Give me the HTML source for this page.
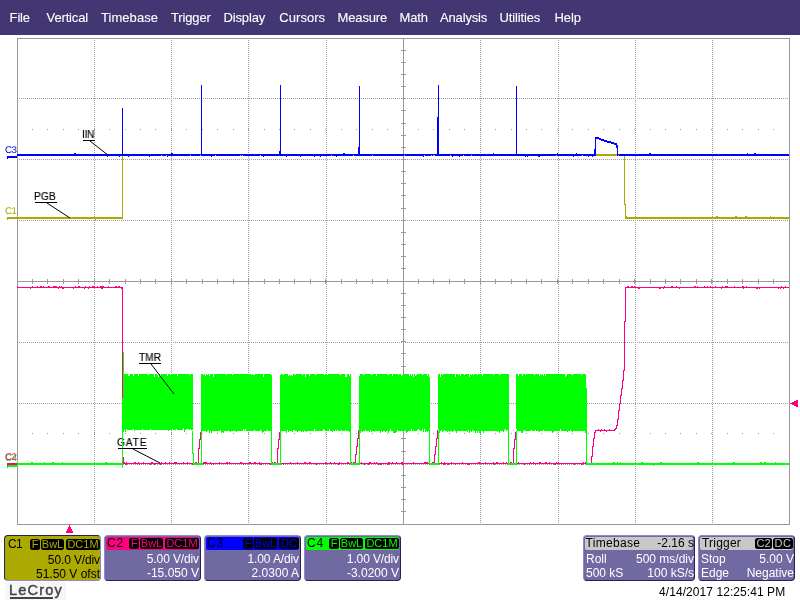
<!DOCTYPE html>
<html><head><meta charset="utf-8"><title>LeCroy</title>
<style>
html,body{margin:0;padding:0}
body{width:800px;height:600px;background:#fff;position:relative;overflow:hidden;font-family:"Liberation Sans",sans-serif;}
#menu{position:absolute;left:0;top:0;width:800px;height:35px;background:#423773;color:#fff;font-size:13px;-webkit-text-stroke:0.1px #fff}
#menu span{position:absolute;top:10px;line-height:15px;white-space:nowrap}
svg{position:absolute;left:0;top:0}
body>div{will-change:transform}
.lbl{position:absolute;font-size:10.67px;line-height:10px;transform-origin:0 0;transform:scaleX(0.95);-webkit-text-stroke:0.15px #000;color:#000;white-space:nowrap}
.ch{position:absolute;font-size:9.8px;line-height:10px;letter-spacing:-0.6px;text-rendering:geometricPrecision;white-space:nowrap}
.box,.ibox{position:absolute;top:535px;box-sizing:border-box;height:46px;background:#7069a2;border:1px solid;border-color:#9088c8 #28205a #28205a #9088c8;border-radius:4px;overflow:hidden;color:#fff;font-size:12px}
.box{width:97px}
.box.pressed{background:#acaa00;color:#000;border-color:#28205a #9088d0 #9088d0 #28205a}
.in{position:absolute;left:0;top:0;right:0;bottom:0}
.pressed .in{left:1px;top:1px;right:-1px;bottom:-1px}
.stripe{position:absolute;left:1px;top:1px;right:1px;height:13px;border-radius:2px}
.box b{position:absolute;left:2px;top:0px;font-weight:normal;font-size:12px;line-height:14px;color:#000;letter-spacing:0.8px}
.bd{position:absolute;right:1px;top:2px;height:11px;white-space:nowrap;font-size:0}
.bd i{display:inline-block;font-style:normal;font-size:11px;line-height:11px;height:11px;background:#000;border-radius:2.5px;text-align:center;letter-spacing:0px}
.l1,.l2{position:absolute;right:1px;white-space:nowrap;line-height:14px}
.l1{top:16px;letter-spacing:-0.12px} .l2{top:30px}
.ibox .hd{position:absolute;left:1px;top:1px;right:1px;height:13px;background:#c8c8c8;border-radius:2px;color:#000}
.ibox span{position:absolute;white-space:nowrap;line-height:14px}
.k{display:inline-block;background:#000;color:#c8c8c8;border-radius:2.5px;font-size:11px;line-height:11px;height:11px;text-align:center;margin-left:1px;font-style:normal;letter-spacing:0px}
</style></head><body>
<div id="menu"><span style="left:9.6px;letter-spacing:-0.15px">File</span><span style="left:46.6px;letter-spacing:-0.15px">Vertical</span><span style="left:101px;letter-spacing:0.05px">Timebase</span><span style="left:171px;letter-spacing:-0.15px">Trigger</span><span style="left:223.5px;letter-spacing:-0.15px">Display</span><span style="left:279.3px;letter-spacing:0.05px">Cursors</span><span style="left:337.6px;letter-spacing:-0.15px">Measure</span><span style="left:399.5px;letter-spacing:-0.15px">Math</span><span style="left:440px;letter-spacing:-0.15px">Analysis</span><span style="left:499.6px;letter-spacing:-0.15px">Utilities</span><span style="left:554.6px;letter-spacing:-0.15px">Help</span></div>
<svg width="800" height="600" viewBox="0 0 800 600" shape-rendering="crispEdges">
<rect x="17.5" y="38.5" width="772" height="486" fill="none" stroke="#989898" stroke-width="1"/>
<line x1="94.5" y1="40" x2="94.5" y2="524" stroke="#9c9c9c" stroke-width="1" stroke-dasharray="1 1"/>
<line x1="171.5" y1="40" x2="171.5" y2="524" stroke="#9c9c9c" stroke-width="1" stroke-dasharray="1 1"/>
<line x1="248.5" y1="40" x2="248.5" y2="524" stroke="#9c9c9c" stroke-width="1" stroke-dasharray="1 1"/>
<line x1="326.5" y1="40" x2="326.5" y2="524" stroke="#9c9c9c" stroke-width="1" stroke-dasharray="1 1"/>
<line x1="480.5" y1="40" x2="480.5" y2="524" stroke="#9c9c9c" stroke-width="1" stroke-dasharray="1 1"/>
<line x1="558.5" y1="40" x2="558.5" y2="524" stroke="#9c9c9c" stroke-width="1" stroke-dasharray="1 1"/>
<line x1="635.5" y1="40" x2="635.5" y2="524" stroke="#9c9c9c" stroke-width="1" stroke-dasharray="1 1"/>
<line x1="712.5" y1="40" x2="712.5" y2="524" stroke="#9c9c9c" stroke-width="1" stroke-dasharray="1 1"/>
<line x1="19" y1="98.5" x2="789" y2="98.5" stroke="#9c9c9c" stroke-width="1" stroke-dasharray="1 1"/>
<line x1="19" y1="159.5" x2="789" y2="159.5" stroke="#9c9c9c" stroke-width="1" stroke-dasharray="1 1"/>
<line x1="19" y1="220.5" x2="789" y2="220.5" stroke="#9c9c9c" stroke-width="1" stroke-dasharray="1 1"/>
<line x1="19" y1="342.5" x2="789" y2="342.5" stroke="#9c9c9c" stroke-width="1" stroke-dasharray="1 1"/>
<line x1="19" y1="403.5" x2="789" y2="403.5" stroke="#9c9c9c" stroke-width="1" stroke-dasharray="1 1"/>
<line x1="19" y1="464.5" x2="789" y2="464.5" stroke="#9c9c9c" stroke-width="1" stroke-dasharray="1 1"/>
<rect x="403" y="38" width="1" height="486" fill="#989898"/>
<rect x="17" y="281" width="772" height="1" fill="#989898"/>
<rect x="32" y="279" width="1" height="5" fill="#989898"/>
<rect x="47" y="279" width="1" height="5" fill="#989898"/>
<rect x="63" y="279" width="1" height="5" fill="#989898"/>
<rect x="78" y="279" width="1" height="5" fill="#989898"/>
<rect x="94" y="279" width="1" height="5" fill="#989898"/>
<rect x="109" y="279" width="1" height="5" fill="#989898"/>
<rect x="125" y="279" width="1" height="5" fill="#989898"/>
<rect x="140" y="279" width="1" height="5" fill="#989898"/>
<rect x="155" y="279" width="1" height="5" fill="#989898"/>
<rect x="171" y="279" width="1" height="5" fill="#989898"/>
<rect x="186" y="279" width="1" height="5" fill="#989898"/>
<rect x="202" y="279" width="1" height="5" fill="#989898"/>
<rect x="217" y="279" width="1" height="5" fill="#989898"/>
<rect x="233" y="279" width="1" height="5" fill="#989898"/>
<rect x="248" y="279" width="1" height="5" fill="#989898"/>
<rect x="264" y="279" width="1" height="5" fill="#989898"/>
<rect x="279" y="279" width="1" height="5" fill="#989898"/>
<rect x="294" y="279" width="1" height="5" fill="#989898"/>
<rect x="310" y="279" width="1" height="5" fill="#989898"/>
<rect x="325" y="279" width="1" height="5" fill="#989898"/>
<rect x="341" y="279" width="1" height="5" fill="#989898"/>
<rect x="356" y="279" width="1" height="5" fill="#989898"/>
<rect x="372" y="279" width="1" height="5" fill="#989898"/>
<rect x="387" y="279" width="1" height="5" fill="#989898"/>
<rect x="403" y="279" width="1" height="5" fill="#989898"/>
<rect x="418" y="279" width="1" height="5" fill="#989898"/>
<rect x="433" y="279" width="1" height="5" fill="#989898"/>
<rect x="449" y="279" width="1" height="5" fill="#989898"/>
<rect x="464" y="279" width="1" height="5" fill="#989898"/>
<rect x="480" y="279" width="1" height="5" fill="#989898"/>
<rect x="495" y="279" width="1" height="5" fill="#989898"/>
<rect x="511" y="279" width="1" height="5" fill="#989898"/>
<rect x="526" y="279" width="1" height="5" fill="#989898"/>
<rect x="541" y="279" width="1" height="5" fill="#989898"/>
<rect x="557" y="279" width="1" height="5" fill="#989898"/>
<rect x="572" y="279" width="1" height="5" fill="#989898"/>
<rect x="588" y="279" width="1" height="5" fill="#989898"/>
<rect x="603" y="279" width="1" height="5" fill="#989898"/>
<rect x="619" y="279" width="1" height="5" fill="#989898"/>
<rect x="634" y="279" width="1" height="5" fill="#989898"/>
<rect x="650" y="279" width="1" height="5" fill="#989898"/>
<rect x="665" y="279" width="1" height="5" fill="#989898"/>
<rect x="680" y="279" width="1" height="5" fill="#989898"/>
<rect x="696" y="279" width="1" height="5" fill="#989898"/>
<rect x="711" y="279" width="1" height="5" fill="#989898"/>
<rect x="727" y="279" width="1" height="5" fill="#989898"/>
<rect x="742" y="279" width="1" height="5" fill="#989898"/>
<rect x="758" y="279" width="1" height="5" fill="#989898"/>
<rect x="773" y="279" width="1" height="5" fill="#989898"/>
<rect x="401" y="50" width="5" height="1" fill="#989898"/>
<rect x="401" y="62" width="5" height="1" fill="#989898"/>
<rect x="401" y="74" width="5" height="1" fill="#989898"/>
<rect x="401" y="86" width="5" height="1" fill="#989898"/>
<rect x="401" y="98" width="5" height="1" fill="#989898"/>
<rect x="401" y="110" width="5" height="1" fill="#989898"/>
<rect x="401" y="123" width="5" height="1" fill="#989898"/>
<rect x="401" y="135" width="5" height="1" fill="#989898"/>
<rect x="401" y="147" width="5" height="1" fill="#989898"/>
<rect x="401" y="159" width="5" height="1" fill="#989898"/>
<rect x="401" y="171" width="5" height="1" fill="#989898"/>
<rect x="401" y="183" width="5" height="1" fill="#989898"/>
<rect x="401" y="195" width="5" height="1" fill="#989898"/>
<rect x="401" y="208" width="5" height="1" fill="#989898"/>
<rect x="401" y="220" width="5" height="1" fill="#989898"/>
<rect x="401" y="232" width="5" height="1" fill="#989898"/>
<rect x="401" y="244" width="5" height="1" fill="#989898"/>
<rect x="401" y="256" width="5" height="1" fill="#989898"/>
<rect x="401" y="268" width="5" height="1" fill="#989898"/>
<rect x="401" y="281" width="5" height="1" fill="#989898"/>
<rect x="401" y="293" width="5" height="1" fill="#989898"/>
<rect x="401" y="305" width="5" height="1" fill="#989898"/>
<rect x="401" y="317" width="5" height="1" fill="#989898"/>
<rect x="401" y="329" width="5" height="1" fill="#989898"/>
<rect x="401" y="341" width="5" height="1" fill="#989898"/>
<rect x="401" y="353" width="5" height="1" fill="#989898"/>
<rect x="401" y="366" width="5" height="1" fill="#989898"/>
<rect x="401" y="378" width="5" height="1" fill="#989898"/>
<rect x="401" y="390" width="5" height="1" fill="#989898"/>
<rect x="401" y="402" width="5" height="1" fill="#989898"/>
<rect x="401" y="414" width="5" height="1" fill="#989898"/>
<rect x="401" y="426" width="5" height="1" fill="#989898"/>
<rect x="401" y="438" width="5" height="1" fill="#989898"/>
<rect x="401" y="451" width="5" height="1" fill="#989898"/>
<rect x="401" y="463" width="5" height="1" fill="#989898"/>
<rect x="401" y="475" width="5" height="1" fill="#989898"/>
<rect x="401" y="487" width="5" height="1" fill="#989898"/>
<rect x="401" y="499" width="5" height="1" fill="#989898"/>
<rect x="401" y="511" width="5" height="1" fill="#989898"/>
<rect x="32" y="129" width="1" height="1" fill="#9c9c9c"/>
<rect x="47" y="129" width="1" height="1" fill="#9c9c9c"/>
<rect x="63" y="129" width="1" height="1" fill="#9c9c9c"/>
<rect x="78" y="129" width="1" height="1" fill="#9c9c9c"/>
<rect x="94" y="129" width="1" height="1" fill="#9c9c9c"/>
<rect x="109" y="129" width="1" height="1" fill="#9c9c9c"/>
<rect x="125" y="129" width="1" height="1" fill="#9c9c9c"/>
<rect x="140" y="129" width="1" height="1" fill="#9c9c9c"/>
<rect x="155" y="129" width="1" height="1" fill="#9c9c9c"/>
<rect x="171" y="129" width="1" height="1" fill="#9c9c9c"/>
<rect x="186" y="129" width="1" height="1" fill="#9c9c9c"/>
<rect x="202" y="129" width="1" height="1" fill="#9c9c9c"/>
<rect x="217" y="129" width="1" height="1" fill="#9c9c9c"/>
<rect x="233" y="129" width="1" height="1" fill="#9c9c9c"/>
<rect x="248" y="129" width="1" height="1" fill="#9c9c9c"/>
<rect x="264" y="129" width="1" height="1" fill="#9c9c9c"/>
<rect x="279" y="129" width="1" height="1" fill="#9c9c9c"/>
<rect x="294" y="129" width="1" height="1" fill="#9c9c9c"/>
<rect x="310" y="129" width="1" height="1" fill="#9c9c9c"/>
<rect x="325" y="129" width="1" height="1" fill="#9c9c9c"/>
<rect x="341" y="129" width="1" height="1" fill="#9c9c9c"/>
<rect x="356" y="129" width="1" height="1" fill="#9c9c9c"/>
<rect x="372" y="129" width="1" height="1" fill="#9c9c9c"/>
<rect x="387" y="129" width="1" height="1" fill="#9c9c9c"/>
<rect x="403" y="129" width="1" height="1" fill="#9c9c9c"/>
<rect x="418" y="129" width="1" height="1" fill="#9c9c9c"/>
<rect x="433" y="129" width="1" height="1" fill="#9c9c9c"/>
<rect x="449" y="129" width="1" height="1" fill="#9c9c9c"/>
<rect x="464" y="129" width="1" height="1" fill="#9c9c9c"/>
<rect x="480" y="129" width="1" height="1" fill="#9c9c9c"/>
<rect x="495" y="129" width="1" height="1" fill="#9c9c9c"/>
<rect x="511" y="129" width="1" height="1" fill="#9c9c9c"/>
<rect x="526" y="129" width="1" height="1" fill="#9c9c9c"/>
<rect x="541" y="129" width="1" height="1" fill="#9c9c9c"/>
<rect x="557" y="129" width="1" height="1" fill="#9c9c9c"/>
<rect x="572" y="129" width="1" height="1" fill="#9c9c9c"/>
<rect x="588" y="129" width="1" height="1" fill="#9c9c9c"/>
<rect x="603" y="129" width="1" height="1" fill="#9c9c9c"/>
<rect x="619" y="129" width="1" height="1" fill="#9c9c9c"/>
<rect x="634" y="129" width="1" height="1" fill="#9c9c9c"/>
<rect x="650" y="129" width="1" height="1" fill="#9c9c9c"/>
<rect x="665" y="129" width="1" height="1" fill="#9c9c9c"/>
<rect x="680" y="129" width="1" height="1" fill="#9c9c9c"/>
<rect x="696" y="129" width="1" height="1" fill="#9c9c9c"/>
<rect x="711" y="129" width="1" height="1" fill="#9c9c9c"/>
<rect x="727" y="129" width="1" height="1" fill="#9c9c9c"/>
<rect x="742" y="129" width="1" height="1" fill="#9c9c9c"/>
<rect x="758" y="129" width="1" height="1" fill="#9c9c9c"/>
<rect x="773" y="129" width="1" height="1" fill="#9c9c9c"/>
<rect x="32" y="433" width="1" height="1" fill="#9c9c9c"/>
<rect x="47" y="433" width="1" height="1" fill="#9c9c9c"/>
<rect x="63" y="433" width="1" height="1" fill="#9c9c9c"/>
<rect x="78" y="433" width="1" height="1" fill="#9c9c9c"/>
<rect x="94" y="433" width="1" height="1" fill="#9c9c9c"/>
<rect x="109" y="433" width="1" height="1" fill="#9c9c9c"/>
<rect x="125" y="433" width="1" height="1" fill="#9c9c9c"/>
<rect x="140" y="433" width="1" height="1" fill="#9c9c9c"/>
<rect x="155" y="433" width="1" height="1" fill="#9c9c9c"/>
<rect x="171" y="433" width="1" height="1" fill="#9c9c9c"/>
<rect x="186" y="433" width="1" height="1" fill="#9c9c9c"/>
<rect x="202" y="433" width="1" height="1" fill="#9c9c9c"/>
<rect x="217" y="433" width="1" height="1" fill="#9c9c9c"/>
<rect x="233" y="433" width="1" height="1" fill="#9c9c9c"/>
<rect x="248" y="433" width="1" height="1" fill="#9c9c9c"/>
<rect x="264" y="433" width="1" height="1" fill="#9c9c9c"/>
<rect x="279" y="433" width="1" height="1" fill="#9c9c9c"/>
<rect x="294" y="433" width="1" height="1" fill="#9c9c9c"/>
<rect x="310" y="433" width="1" height="1" fill="#9c9c9c"/>
<rect x="325" y="433" width="1" height="1" fill="#9c9c9c"/>
<rect x="341" y="433" width="1" height="1" fill="#9c9c9c"/>
<rect x="356" y="433" width="1" height="1" fill="#9c9c9c"/>
<rect x="372" y="433" width="1" height="1" fill="#9c9c9c"/>
<rect x="387" y="433" width="1" height="1" fill="#9c9c9c"/>
<rect x="403" y="433" width="1" height="1" fill="#9c9c9c"/>
<rect x="418" y="433" width="1" height="1" fill="#9c9c9c"/>
<rect x="433" y="433" width="1" height="1" fill="#9c9c9c"/>
<rect x="449" y="433" width="1" height="1" fill="#9c9c9c"/>
<rect x="464" y="433" width="1" height="1" fill="#9c9c9c"/>
<rect x="480" y="433" width="1" height="1" fill="#9c9c9c"/>
<rect x="495" y="433" width="1" height="1" fill="#9c9c9c"/>
<rect x="511" y="433" width="1" height="1" fill="#9c9c9c"/>
<rect x="526" y="433" width="1" height="1" fill="#9c9c9c"/>
<rect x="541" y="433" width="1" height="1" fill="#9c9c9c"/>
<rect x="557" y="433" width="1" height="1" fill="#9c9c9c"/>
<rect x="572" y="433" width="1" height="1" fill="#9c9c9c"/>
<rect x="588" y="433" width="1" height="1" fill="#9c9c9c"/>
<rect x="603" y="433" width="1" height="1" fill="#9c9c9c"/>
<rect x="619" y="433" width="1" height="1" fill="#9c9c9c"/>
<rect x="634" y="433" width="1" height="1" fill="#9c9c9c"/>
<rect x="650" y="433" width="1" height="1" fill="#9c9c9c"/>
<rect x="665" y="433" width="1" height="1" fill="#9c9c9c"/>
<rect x="680" y="433" width="1" height="1" fill="#9c9c9c"/>
<rect x="696" y="433" width="1" height="1" fill="#9c9c9c"/>
<rect x="711" y="433" width="1" height="1" fill="#9c9c9c"/>
<rect x="727" y="433" width="1" height="1" fill="#9c9c9c"/>
<rect x="742" y="433" width="1" height="1" fill="#9c9c9c"/>
<rect x="758" y="433" width="1" height="1" fill="#9c9c9c"/>
<rect x="773" y="433" width="1" height="1" fill="#9c9c9c"/>
<rect x="17" y="217" width="105" height="2" fill="#acaa00"/>
<rect x="95" y="219" width="1" height="1" fill="#acaa00"/>
<rect x="122" y="155" width="1" height="64" fill="#acaa00"/>
<rect x="122" y="154" width="503" height="2" fill="#acaa00"/>
<rect x="624" y="154" width="1" height="51" fill="#acaa00"/>
<rect x="625" y="204" width="1" height="15" fill="#acaa00"/>
<rect x="625" y="217" width="164" height="2" fill="#acaa00"/>
<rect x="626" y="216" width="1" height="1" fill="#acaa00"/>
<rect x="716" y="216" width="2" height="1" fill="#acaa00"/>
<rect x="735" y="216" width="2" height="1" fill="#acaa00"/>
<rect x="745" y="216" width="2" height="1" fill="#acaa00"/>
<rect x="770" y="216" width="1" height="1" fill="#acaa00"/>
<rect x="17" y="287" width="105" height="1" fill="#ff0080"/>
<rect x="17" y="286" width="1" height="1" fill="#ff0080"/>
<rect x="30" y="288" width="1" height="1" fill="#ff0080"/>
<rect x="32" y="286" width="1" height="1" fill="#ff0080"/>
<rect x="37" y="286" width="1" height="1" fill="#ff0080"/>
<rect x="40" y="286" width="1" height="1" fill="#ff0080"/>
<rect x="41" y="286" width="1" height="1" fill="#ff0080"/>
<rect x="43" y="286" width="1" height="1" fill="#ff0080"/>
<rect x="48" y="286" width="2" height="1" fill="#ff0080"/>
<rect x="53" y="286" width="1" height="1" fill="#ff0080"/>
<rect x="54" y="286" width="2" height="1" fill="#ff0080"/>
<rect x="56" y="286" width="1" height="1" fill="#ff0080"/>
<rect x="58" y="288" width="1" height="1" fill="#ff0080"/>
<rect x="59" y="286" width="1" height="1" fill="#ff0080"/>
<rect x="61" y="286" width="1" height="1" fill="#ff0080"/>
<rect x="62" y="288" width="1" height="1" fill="#ff0080"/>
<rect x="63" y="288" width="1" height="1" fill="#ff0080"/>
<rect x="73" y="288" width="1" height="1" fill="#ff0080"/>
<rect x="75" y="286" width="1" height="1" fill="#ff0080"/>
<rect x="78" y="286" width="1" height="1" fill="#ff0080"/>
<rect x="79" y="286" width="1" height="1" fill="#ff0080"/>
<rect x="84" y="288" width="1" height="1" fill="#ff0080"/>
<rect x="85" y="286" width="1" height="1" fill="#ff0080"/>
<rect x="88" y="288" width="1" height="1" fill="#ff0080"/>
<rect x="89" y="286" width="1" height="1" fill="#ff0080"/>
<rect x="92" y="286" width="2" height="1" fill="#ff0080"/>
<rect x="94" y="286" width="1" height="1" fill="#ff0080"/>
<rect x="97" y="286" width="1" height="1" fill="#ff0080"/>
<rect x="100" y="286" width="2" height="1" fill="#ff0080"/>
<rect x="101" y="288" width="2" height="1" fill="#ff0080"/>
<rect x="102" y="286" width="2" height="1" fill="#ff0080"/>
<rect x="108" y="286" width="1" height="1" fill="#ff0080"/>
<rect x="115" y="286" width="1" height="1" fill="#ff0080"/>
<rect x="116" y="286" width="1" height="1" fill="#ff0080"/>
<rect x="118" y="286" width="2" height="1" fill="#ff0080"/>
<rect x="121" y="288" width="1" height="1" fill="#ff0080"/>
<rect x="122" y="287" width="1" height="176" fill="#ff0080"/>
<rect x="123" y="457" width="1" height="7" fill="#ff0080"/>
<rect x="123" y="463" width="463" height="1" fill="#ff0080"/>
<rect x="124" y="462" width="1" height="1" fill="#ff0080"/>
<rect x="125" y="464" width="2" height="1" fill="#ff0080"/>
<rect x="126" y="462" width="1" height="1" fill="#ff0080"/>
<rect x="134" y="462" width="2" height="1" fill="#ff0080"/>
<rect x="135" y="462" width="1" height="1" fill="#ff0080"/>
<rect x="137" y="464" width="1" height="1" fill="#ff0080"/>
<rect x="138" y="462" width="1" height="1" fill="#ff0080"/>
<rect x="139" y="464" width="1" height="1" fill="#ff0080"/>
<rect x="143" y="462" width="1" height="1" fill="#ff0080"/>
<rect x="150" y="464" width="1" height="1" fill="#ff0080"/>
<rect x="151" y="462" width="2" height="1" fill="#ff0080"/>
<rect x="154" y="464" width="1" height="1" fill="#ff0080"/>
<rect x="160" y="464" width="1" height="1" fill="#ff0080"/>
<rect x="161" y="462" width="1" height="1" fill="#ff0080"/>
<rect x="165" y="462" width="1" height="1" fill="#ff0080"/>
<rect x="169" y="462" width="1" height="1" fill="#ff0080"/>
<rect x="174" y="462" width="2" height="1" fill="#ff0080"/>
<rect x="176" y="462" width="1" height="1" fill="#ff0080"/>
<rect x="183" y="462" width="1" height="1" fill="#ff0080"/>
<rect x="187" y="462" width="1" height="1" fill="#ff0080"/>
<rect x="192" y="464" width="2" height="1" fill="#ff0080"/>
<rect x="193" y="462" width="1" height="1" fill="#ff0080"/>
<rect x="195" y="462" width="1" height="1" fill="#ff0080"/>
<rect x="201" y="462" width="1" height="1" fill="#ff0080"/>
<rect x="203" y="462" width="2" height="1" fill="#ff0080"/>
<rect x="204" y="462" width="2" height="1" fill="#ff0080"/>
<rect x="205" y="462" width="2" height="1" fill="#ff0080"/>
<rect x="210" y="462" width="1" height="1" fill="#ff0080"/>
<rect x="211" y="464" width="1" height="1" fill="#ff0080"/>
<rect x="213" y="464" width="1" height="1" fill="#ff0080"/>
<rect x="219" y="462" width="1" height="1" fill="#ff0080"/>
<rect x="226" y="462" width="1" height="1" fill="#ff0080"/>
<rect x="227" y="462" width="1" height="1" fill="#ff0080"/>
<rect x="229" y="462" width="1" height="1" fill="#ff0080"/>
<rect x="240" y="462" width="1" height="1" fill="#ff0080"/>
<rect x="241" y="462" width="1" height="1" fill="#ff0080"/>
<rect x="243" y="464" width="1" height="1" fill="#ff0080"/>
<rect x="249" y="462" width="2" height="1" fill="#ff0080"/>
<rect x="254" y="462" width="2" height="1" fill="#ff0080"/>
<rect x="259" y="462" width="1" height="1" fill="#ff0080"/>
<rect x="260" y="464" width="2" height="1" fill="#ff0080"/>
<rect x="270" y="464" width="1" height="1" fill="#ff0080"/>
<rect x="271" y="462" width="2" height="1" fill="#ff0080"/>
<rect x="279" y="464" width="1" height="1" fill="#ff0080"/>
<rect x="283" y="464" width="1" height="1" fill="#ff0080"/>
<rect x="290" y="462" width="1" height="1" fill="#ff0080"/>
<rect x="297" y="462" width="1" height="1" fill="#ff0080"/>
<rect x="304" y="462" width="2" height="1" fill="#ff0080"/>
<rect x="309" y="462" width="2" height="1" fill="#ff0080"/>
<rect x="316" y="464" width="1" height="1" fill="#ff0080"/>
<rect x="325" y="462" width="1" height="1" fill="#ff0080"/>
<rect x="330" y="462" width="1" height="1" fill="#ff0080"/>
<rect x="334" y="462" width="1" height="1" fill="#ff0080"/>
<rect x="338" y="464" width="1" height="1" fill="#ff0080"/>
<rect x="339" y="462" width="1" height="1" fill="#ff0080"/>
<rect x="347" y="462" width="2" height="1" fill="#ff0080"/>
<rect x="350" y="462" width="2" height="1" fill="#ff0080"/>
<rect x="353" y="462" width="1" height="1" fill="#ff0080"/>
<rect x="356" y="464" width="1" height="1" fill="#ff0080"/>
<rect x="361" y="462" width="1" height="1" fill="#ff0080"/>
<rect x="364" y="464" width="1" height="1" fill="#ff0080"/>
<rect x="368" y="464" width="1" height="1" fill="#ff0080"/>
<rect x="369" y="462" width="2" height="1" fill="#ff0080"/>
<rect x="374" y="462" width="1" height="1" fill="#ff0080"/>
<rect x="376" y="462" width="1" height="1" fill="#ff0080"/>
<rect x="378" y="464" width="1" height="1" fill="#ff0080"/>
<rect x="380" y="464" width="2" height="1" fill="#ff0080"/>
<rect x="387" y="464" width="2" height="1" fill="#ff0080"/>
<rect x="388" y="462" width="2" height="1" fill="#ff0080"/>
<rect x="392" y="462" width="1" height="1" fill="#ff0080"/>
<rect x="396" y="462" width="1" height="1" fill="#ff0080"/>
<rect x="401" y="462" width="2" height="1" fill="#ff0080"/>
<rect x="402" y="464" width="2" height="1" fill="#ff0080"/>
<rect x="403" y="464" width="1" height="1" fill="#ff0080"/>
<rect x="413" y="462" width="1" height="1" fill="#ff0080"/>
<rect x="424" y="462" width="1" height="1" fill="#ff0080"/>
<rect x="425" y="462" width="1" height="1" fill="#ff0080"/>
<rect x="426" y="462" width="2" height="1" fill="#ff0080"/>
<rect x="433" y="464" width="1" height="1" fill="#ff0080"/>
<rect x="441" y="462" width="1" height="1" fill="#ff0080"/>
<rect x="443" y="464" width="2" height="1" fill="#ff0080"/>
<rect x="444" y="462" width="1" height="1" fill="#ff0080"/>
<rect x="447" y="464" width="2" height="1" fill="#ff0080"/>
<rect x="451" y="462" width="1" height="1" fill="#ff0080"/>
<rect x="455" y="464" width="1" height="1" fill="#ff0080"/>
<rect x="462" y="462" width="1" height="1" fill="#ff0080"/>
<rect x="467" y="464" width="1" height="1" fill="#ff0080"/>
<rect x="468" y="464" width="1" height="1" fill="#ff0080"/>
<rect x="469" y="464" width="1" height="1" fill="#ff0080"/>
<rect x="478" y="462" width="2" height="1" fill="#ff0080"/>
<rect x="485" y="462" width="1" height="1" fill="#ff0080"/>
<rect x="493" y="462" width="1" height="1" fill="#ff0080"/>
<rect x="494" y="464" width="1" height="1" fill="#ff0080"/>
<rect x="496" y="462" width="1" height="1" fill="#ff0080"/>
<rect x="497" y="462" width="1" height="1" fill="#ff0080"/>
<rect x="503" y="462" width="1" height="1" fill="#ff0080"/>
<rect x="506" y="462" width="1" height="1" fill="#ff0080"/>
<rect x="509" y="464" width="1" height="1" fill="#ff0080"/>
<rect x="516" y="462" width="1" height="1" fill="#ff0080"/>
<rect x="518" y="462" width="1" height="1" fill="#ff0080"/>
<rect x="524" y="464" width="1" height="1" fill="#ff0080"/>
<rect x="529" y="464" width="1" height="1" fill="#ff0080"/>
<rect x="530" y="462" width="1" height="1" fill="#ff0080"/>
<rect x="533" y="462" width="1" height="1" fill="#ff0080"/>
<rect x="535" y="464" width="1" height="1" fill="#ff0080"/>
<rect x="539" y="462" width="2" height="1" fill="#ff0080"/>
<rect x="545" y="462" width="2" height="1" fill="#ff0080"/>
<rect x="549" y="462" width="1" height="1" fill="#ff0080"/>
<rect x="554" y="464" width="2" height="1" fill="#ff0080"/>
<rect x="555" y="464" width="1" height="1" fill="#ff0080"/>
<rect x="556" y="462" width="1" height="1" fill="#ff0080"/>
<rect x="558" y="462" width="1" height="1" fill="#ff0080"/>
<rect x="561" y="464" width="1" height="1" fill="#ff0080"/>
<rect x="574" y="464" width="1" height="1" fill="#ff0080"/>
<rect x="581" y="464" width="2" height="1" fill="#ff0080"/>
<rect x="583" y="462" width="1" height="1" fill="#ff0080"/>
<rect x="585" y="462" width="1" height="1" fill="#ff0080"/>
<rect x="195" y="462" width="2" height="1" fill="#ff0080"/>
<rect x="198" y="448" width="1" height="15" fill="#ff0080"/>
<rect x="199" y="439" width="1" height="10" fill="#ff0080"/>
<rect x="200" y="432" width="1" height="8" fill="#ff0080"/>
<rect x="274" y="462" width="2" height="1" fill="#ff0080"/>
<rect x="277" y="448" width="1" height="15" fill="#ff0080"/>
<rect x="278" y="439" width="1" height="10" fill="#ff0080"/>
<rect x="279" y="432" width="1" height="8" fill="#ff0080"/>
<rect x="353" y="462" width="2" height="1" fill="#ff0080"/>
<rect x="355" y="454" width="1" height="9" fill="#ff0080"/>
<rect x="356" y="446" width="1" height="9" fill="#ff0080"/>
<rect x="357" y="438" width="1" height="9" fill="#ff0080"/>
<rect x="358" y="430" width="1" height="9" fill="#ff0080"/>
<rect x="432" y="462" width="2" height="1" fill="#ff0080"/>
<rect x="434" y="454" width="1" height="9" fill="#ff0080"/>
<rect x="435" y="446" width="1" height="9" fill="#ff0080"/>
<rect x="436" y="438" width="1" height="9" fill="#ff0080"/>
<rect x="437" y="430" width="1" height="9" fill="#ff0080"/>
<rect x="510" y="462" width="2" height="1" fill="#ff0080"/>
<rect x="513" y="448" width="1" height="15" fill="#ff0080"/>
<rect x="514" y="439" width="1" height="10" fill="#ff0080"/>
<rect x="515" y="432" width="1" height="8" fill="#ff0080"/>
<rect x="591" y="456" width="1" height="8" fill="#ff0080"/>
<rect x="592" y="446" width="1" height="11" fill="#ff0080"/>
<rect x="593" y="438" width="1" height="9" fill="#ff0080"/>
<rect x="594" y="432" width="1" height="7" fill="#ff0080"/>
<rect x="595" y="430" width="1" height="3" fill="#ff0080"/>
<rect x="595" y="430" width="19" height="1" fill="#ff0080"/>
<rect x="598" y="429" width="1" height="1" fill="#ff0080"/>
<rect x="601" y="429" width="1" height="1" fill="#ff0080"/>
<rect x="604" y="429" width="1" height="1" fill="#ff0080"/>
<rect x="609" y="429" width="1" height="1" fill="#ff0080"/>
<rect x="600" y="431" width="1" height="1" fill="#ff0080"/>
<rect x="606" y="431" width="1" height="1" fill="#ff0080"/>
<rect x="614" y="429" width="1" height="2" fill="#ff0080"/>
<rect x="615" y="428" width="1" height="2" fill="#ff0080"/>
<rect x="616" y="425" width="1" height="4" fill="#ff0080"/>
<rect x="617" y="419" width="1" height="7" fill="#ff0080"/>
<rect x="618" y="410" width="1" height="10" fill="#ff0080"/>
<rect x="619" y="403" width="1" height="8" fill="#ff0080"/>
<rect x="620" y="395" width="1" height="9" fill="#ff0080"/>
<rect x="621" y="388" width="1" height="8" fill="#ff0080"/>
<rect x="622" y="380" width="1" height="9" fill="#ff0080"/>
<rect x="623" y="370" width="1" height="11" fill="#ff0080"/>
<rect x="624" y="321" width="1" height="50" fill="#ff0080"/>
<rect x="625" y="287" width="1" height="35" fill="#ff0080"/>
<rect x="625" y="287" width="164" height="1" fill="#ff0080"/>
<rect x="627" y="286" width="1" height="1" fill="#ff0080"/>
<rect x="628" y="286" width="1" height="1" fill="#ff0080"/>
<rect x="631" y="286" width="2" height="1" fill="#ff0080"/>
<rect x="634" y="286" width="1" height="1" fill="#ff0080"/>
<rect x="638" y="288" width="2" height="1" fill="#ff0080"/>
<rect x="659" y="288" width="2" height="1" fill="#ff0080"/>
<rect x="660" y="288" width="1" height="1" fill="#ff0080"/>
<rect x="663" y="288" width="1" height="1" fill="#ff0080"/>
<rect x="664" y="286" width="1" height="1" fill="#ff0080"/>
<rect x="671" y="286" width="2" height="1" fill="#ff0080"/>
<rect x="676" y="286" width="1" height="1" fill="#ff0080"/>
<rect x="679" y="288" width="1" height="1" fill="#ff0080"/>
<rect x="694" y="286" width="2" height="1" fill="#ff0080"/>
<rect x="697" y="286" width="1" height="1" fill="#ff0080"/>
<rect x="704" y="286" width="1" height="1" fill="#ff0080"/>
<rect x="707" y="286" width="1" height="1" fill="#ff0080"/>
<rect x="710" y="286" width="1" height="1" fill="#ff0080"/>
<rect x="715" y="286" width="1" height="1" fill="#ff0080"/>
<rect x="721" y="288" width="1" height="1" fill="#ff0080"/>
<rect x="722" y="286" width="1" height="1" fill="#ff0080"/>
<rect x="725" y="286" width="1" height="1" fill="#ff0080"/>
<rect x="726" y="286" width="1" height="1" fill="#ff0080"/>
<rect x="727" y="286" width="1" height="1" fill="#ff0080"/>
<rect x="734" y="286" width="1" height="1" fill="#ff0080"/>
<rect x="742" y="286" width="2" height="1" fill="#ff0080"/>
<rect x="743" y="288" width="1" height="1" fill="#ff0080"/>
<rect x="746" y="286" width="1" height="1" fill="#ff0080"/>
<rect x="756" y="288" width="1" height="1" fill="#ff0080"/>
<rect x="757" y="288" width="1" height="1" fill="#ff0080"/>
<rect x="759" y="288" width="1" height="1" fill="#ff0080"/>
<rect x="778" y="288" width="1" height="1" fill="#ff0080"/>
<rect x="780" y="288" width="1" height="1" fill="#ff0080"/>
<rect x="781" y="286" width="1" height="1" fill="#ff0080"/>
<rect x="783" y="288" width="1" height="1" fill="#ff0080"/>
<rect x="785" y="286" width="1" height="1" fill="#ff0080"/>
<rect x="17" y="463" width="106" height="2" fill="#00ff00"/>
<rect x="31" y="462" width="2" height="1" fill="#00ff00"/>
<rect x="44" y="462" width="1" height="1" fill="#00ff00"/>
<rect x="52" y="462" width="2" height="1" fill="#00ff00"/>
<rect x="62" y="462" width="1" height="1" fill="#00ff00"/>
<rect x="105" y="462" width="2" height="1" fill="#00ff00"/>
<rect x="123" y="352" width="1" height="46" fill="#00ff00"/>
<rect x="122" y="398" width="1" height="70" fill="#00ff00"/>
<rect x="123" y="378" width="70" height="50" fill="#00ff00"/>
<rect x="123" y="376" width="1" height="2" fill="#00ff00"/>
<rect x="123" y="428" width="1" height="4" fill="#00ff00"/>
<rect x="124" y="374" width="1" height="4" fill="#00ff00"/>
<rect x="124" y="428" width="1" height="2" fill="#00ff00"/>
<rect x="125" y="374" width="1" height="4" fill="#00ff00"/>
<rect x="125" y="428" width="1" height="4" fill="#00ff00"/>
<rect x="126" y="374" width="1" height="4" fill="#00ff00"/>
<rect x="126" y="428" width="1" height="1" fill="#00ff00"/>
<rect x="127" y="374" width="1" height="4" fill="#00ff00"/>
<rect x="127" y="428" width="1" height="2" fill="#00ff00"/>
<rect x="128" y="376" width="1" height="2" fill="#00ff00"/>
<rect x="128" y="428" width="1" height="2" fill="#00ff00"/>
<rect x="129" y="376" width="1" height="2" fill="#00ff00"/>
<rect x="129" y="428" width="1" height="2" fill="#00ff00"/>
<rect x="130" y="374" width="1" height="4" fill="#00ff00"/>
<rect x="130" y="428" width="1" height="2" fill="#00ff00"/>
<rect x="131" y="374" width="1" height="4" fill="#00ff00"/>
<rect x="131" y="428" width="1" height="2" fill="#00ff00"/>
<rect x="132" y="374" width="1" height="4" fill="#00ff00"/>
<rect x="132" y="428" width="1" height="2" fill="#00ff00"/>
<rect x="133" y="376" width="1" height="2" fill="#00ff00"/>
<rect x="133" y="428" width="1" height="1" fill="#00ff00"/>
<rect x="134" y="374" width="1" height="4" fill="#00ff00"/>
<rect x="134" y="428" width="1" height="3" fill="#00ff00"/>
<rect x="135" y="374" width="1" height="4" fill="#00ff00"/>
<rect x="135" y="428" width="1" height="2" fill="#00ff00"/>
<rect x="136" y="374" width="1" height="4" fill="#00ff00"/>
<rect x="136" y="428" width="1" height="2" fill="#00ff00"/>
<rect x="137" y="374" width="1" height="4" fill="#00ff00"/>
<rect x="137" y="428" width="1" height="2" fill="#00ff00"/>
<rect x="138" y="376" width="1" height="2" fill="#00ff00"/>
<rect x="138" y="428" width="1" height="2" fill="#00ff00"/>
<rect x="139" y="374" width="1" height="4" fill="#00ff00"/>
<rect x="139" y="428" width="1" height="2" fill="#00ff00"/>
<rect x="140" y="374" width="1" height="4" fill="#00ff00"/>
<rect x="140" y="428" width="1" height="2" fill="#00ff00"/>
<rect x="141" y="374" width="1" height="4" fill="#00ff00"/>
<rect x="141" y="428" width="1" height="2" fill="#00ff00"/>
<rect x="142" y="374" width="1" height="4" fill="#00ff00"/>
<rect x="142" y="428" width="1" height="1" fill="#00ff00"/>
<rect x="143" y="374" width="1" height="4" fill="#00ff00"/>
<rect x="143" y="428" width="1" height="2" fill="#00ff00"/>
<rect x="144" y="374" width="1" height="4" fill="#00ff00"/>
<rect x="144" y="428" width="1" height="2" fill="#00ff00"/>
<rect x="145" y="374" width="1" height="4" fill="#00ff00"/>
<rect x="145" y="428" width="1" height="2" fill="#00ff00"/>
<rect x="146" y="374" width="1" height="4" fill="#00ff00"/>
<rect x="146" y="428" width="1" height="2" fill="#00ff00"/>
<rect x="147" y="374" width="1" height="4" fill="#00ff00"/>
<rect x="147" y="428" width="1" height="2" fill="#00ff00"/>
<rect x="148" y="375" width="1" height="3" fill="#00ff00"/>
<rect x="148" y="428" width="1" height="2" fill="#00ff00"/>
<rect x="149" y="374" width="1" height="4" fill="#00ff00"/>
<rect x="149" y="428" width="1" height="2" fill="#00ff00"/>
<rect x="150" y="374" width="1" height="4" fill="#00ff00"/>
<rect x="150" y="428" width="1" height="1" fill="#00ff00"/>
<rect x="151" y="374" width="1" height="4" fill="#00ff00"/>
<rect x="151" y="428" width="1" height="2" fill="#00ff00"/>
<rect x="152" y="374" width="1" height="4" fill="#00ff00"/>
<rect x="152" y="428" width="1" height="2" fill="#00ff00"/>
<rect x="153" y="374" width="1" height="4" fill="#00ff00"/>
<rect x="153" y="428" width="1" height="2" fill="#00ff00"/>
<rect x="154" y="377" width="1" height="1" fill="#00ff00"/>
<rect x="154" y="428" width="1" height="2" fill="#00ff00"/>
<rect x="155" y="374" width="1" height="4" fill="#00ff00"/>
<rect x="155" y="428" width="1" height="2" fill="#00ff00"/>
<rect x="156" y="374" width="1" height="4" fill="#00ff00"/>
<rect x="156" y="428" width="1" height="2" fill="#00ff00"/>
<rect x="157" y="375" width="1" height="3" fill="#00ff00"/>
<rect x="157" y="428" width="1" height="2" fill="#00ff00"/>
<rect x="158" y="377" width="1" height="1" fill="#00ff00"/>
<rect x="158" y="428" width="1" height="2" fill="#00ff00"/>
<rect x="159" y="374" width="1" height="4" fill="#00ff00"/>
<rect x="159" y="428" width="1" height="2" fill="#00ff00"/>
<rect x="160" y="376" width="1" height="2" fill="#00ff00"/>
<rect x="160" y="428" width="1" height="2" fill="#00ff00"/>
<rect x="161" y="374" width="1" height="4" fill="#00ff00"/>
<rect x="161" y="428" width="1" height="2" fill="#00ff00"/>
<rect x="162" y="374" width="1" height="4" fill="#00ff00"/>
<rect x="162" y="428" width="1" height="2" fill="#00ff00"/>
<rect x="163" y="374" width="1" height="4" fill="#00ff00"/>
<rect x="163" y="428" width="1" height="2" fill="#00ff00"/>
<rect x="164" y="374" width="1" height="4" fill="#00ff00"/>
<rect x="164" y="428" width="1" height="2" fill="#00ff00"/>
<rect x="165" y="374" width="1" height="4" fill="#00ff00"/>
<rect x="165" y="428" width="1" height="2" fill="#00ff00"/>
<rect x="166" y="374" width="1" height="4" fill="#00ff00"/>
<rect x="166" y="428" width="1" height="2" fill="#00ff00"/>
<rect x="167" y="376" width="1" height="2" fill="#00ff00"/>
<rect x="167" y="428" width="1" height="2" fill="#00ff00"/>
<rect x="168" y="374" width="1" height="4" fill="#00ff00"/>
<rect x="168" y="428" width="1" height="3" fill="#00ff00"/>
<rect x="169" y="374" width="1" height="4" fill="#00ff00"/>
<rect x="169" y="428" width="1" height="2" fill="#00ff00"/>
<rect x="170" y="375" width="1" height="3" fill="#00ff00"/>
<rect x="170" y="428" width="1" height="2" fill="#00ff00"/>
<rect x="171" y="374" width="1" height="4" fill="#00ff00"/>
<rect x="171" y="428" width="1" height="2" fill="#00ff00"/>
<rect x="172" y="374" width="1" height="4" fill="#00ff00"/>
<rect x="172" y="428" width="1" height="1" fill="#00ff00"/>
<rect x="173" y="374" width="1" height="4" fill="#00ff00"/>
<rect x="173" y="428" width="1" height="2" fill="#00ff00"/>
<rect x="174" y="374" width="1" height="4" fill="#00ff00"/>
<rect x="174" y="428" width="1" height="2" fill="#00ff00"/>
<rect x="175" y="374" width="1" height="4" fill="#00ff00"/>
<rect x="175" y="428" width="1" height="2" fill="#00ff00"/>
<rect x="176" y="374" width="1" height="4" fill="#00ff00"/>
<rect x="176" y="428" width="1" height="1" fill="#00ff00"/>
<rect x="177" y="376" width="1" height="2" fill="#00ff00"/>
<rect x="177" y="428" width="1" height="2" fill="#00ff00"/>
<rect x="178" y="374" width="1" height="4" fill="#00ff00"/>
<rect x="178" y="428" width="1" height="2" fill="#00ff00"/>
<rect x="179" y="374" width="1" height="4" fill="#00ff00"/>
<rect x="179" y="428" width="1" height="2" fill="#00ff00"/>
<rect x="180" y="374" width="1" height="4" fill="#00ff00"/>
<rect x="180" y="428" width="1" height="2" fill="#00ff00"/>
<rect x="181" y="374" width="1" height="4" fill="#00ff00"/>
<rect x="181" y="428" width="1" height="2" fill="#00ff00"/>
<rect x="182" y="374" width="1" height="4" fill="#00ff00"/>
<rect x="182" y="428" width="1" height="2" fill="#00ff00"/>
<rect x="183" y="374" width="1" height="4" fill="#00ff00"/>
<rect x="183" y="428" width="1" height="0" fill="#00ff00"/>
<rect x="184" y="374" width="1" height="4" fill="#00ff00"/>
<rect x="184" y="428" width="1" height="4" fill="#00ff00"/>
<rect x="185" y="374" width="1" height="4" fill="#00ff00"/>
<rect x="185" y="428" width="1" height="2" fill="#00ff00"/>
<rect x="186" y="374" width="1" height="4" fill="#00ff00"/>
<rect x="186" y="428" width="1" height="1" fill="#00ff00"/>
<rect x="187" y="374" width="1" height="4" fill="#00ff00"/>
<rect x="187" y="428" width="1" height="1" fill="#00ff00"/>
<rect x="188" y="374" width="1" height="4" fill="#00ff00"/>
<rect x="188" y="428" width="1" height="1" fill="#00ff00"/>
<rect x="189" y="375" width="1" height="3" fill="#00ff00"/>
<rect x="189" y="428" width="1" height="2" fill="#00ff00"/>
<rect x="190" y="374" width="1" height="4" fill="#00ff00"/>
<rect x="190" y="428" width="1" height="1" fill="#00ff00"/>
<rect x="191" y="374" width="1" height="4" fill="#00ff00"/>
<rect x="191" y="428" width="1" height="2" fill="#00ff00"/>
<rect x="192" y="374" width="1" height="4" fill="#00ff00"/>
<rect x="192" y="428" width="1" height="2" fill="#00ff00"/>
<rect x="192" y="431" width="1" height="23" fill="#00ff00"/>
<rect x="193" y="453" width="1" height="12" fill="#00ff00"/>
<rect x="193" y="463" width="10" height="2" fill="#00ff00"/>
<rect x="201" y="431" width="1" height="34" fill="#00ff00"/>
<rect x="201" y="378" width="71" height="50" fill="#00ff00"/>
<rect x="201" y="374" width="1" height="4" fill="#00ff00"/>
<rect x="201" y="428" width="1" height="3" fill="#00ff00"/>
<rect x="202" y="374" width="1" height="4" fill="#00ff00"/>
<rect x="202" y="428" width="1" height="3" fill="#00ff00"/>
<rect x="203" y="375" width="1" height="3" fill="#00ff00"/>
<rect x="203" y="428" width="1" height="3" fill="#00ff00"/>
<rect x="204" y="374" width="1" height="4" fill="#00ff00"/>
<rect x="204" y="428" width="1" height="3" fill="#00ff00"/>
<rect x="205" y="376" width="1" height="2" fill="#00ff00"/>
<rect x="205" y="428" width="1" height="3" fill="#00ff00"/>
<rect x="206" y="374" width="1" height="4" fill="#00ff00"/>
<rect x="206" y="428" width="1" height="4" fill="#00ff00"/>
<rect x="207" y="375" width="1" height="3" fill="#00ff00"/>
<rect x="207" y="428" width="1" height="3" fill="#00ff00"/>
<rect x="208" y="374" width="1" height="4" fill="#00ff00"/>
<rect x="208" y="428" width="1" height="2" fill="#00ff00"/>
<rect x="209" y="376" width="1" height="2" fill="#00ff00"/>
<rect x="209" y="428" width="1" height="5" fill="#00ff00"/>
<rect x="210" y="374" width="1" height="4" fill="#00ff00"/>
<rect x="210" y="428" width="1" height="3" fill="#00ff00"/>
<rect x="211" y="374" width="1" height="4" fill="#00ff00"/>
<rect x="211" y="428" width="1" height="5" fill="#00ff00"/>
<rect x="212" y="374" width="1" height="4" fill="#00ff00"/>
<rect x="212" y="428" width="1" height="3" fill="#00ff00"/>
<rect x="213" y="377" width="1" height="1" fill="#00ff00"/>
<rect x="213" y="428" width="1" height="3" fill="#00ff00"/>
<rect x="214" y="374" width="1" height="4" fill="#00ff00"/>
<rect x="214" y="428" width="1" height="3" fill="#00ff00"/>
<rect x="215" y="374" width="1" height="4" fill="#00ff00"/>
<rect x="215" y="428" width="1" height="3" fill="#00ff00"/>
<rect x="216" y="374" width="1" height="4" fill="#00ff00"/>
<rect x="216" y="428" width="1" height="3" fill="#00ff00"/>
<rect x="217" y="374" width="1" height="4" fill="#00ff00"/>
<rect x="217" y="428" width="1" height="3" fill="#00ff00"/>
<rect x="218" y="374" width="1" height="4" fill="#00ff00"/>
<rect x="218" y="428" width="1" height="3" fill="#00ff00"/>
<rect x="219" y="374" width="1" height="4" fill="#00ff00"/>
<rect x="219" y="428" width="1" height="3" fill="#00ff00"/>
<rect x="220" y="374" width="1" height="4" fill="#00ff00"/>
<rect x="220" y="428" width="1" height="2" fill="#00ff00"/>
<rect x="221" y="374" width="1" height="4" fill="#00ff00"/>
<rect x="221" y="428" width="1" height="5" fill="#00ff00"/>
<rect x="222" y="374" width="1" height="4" fill="#00ff00"/>
<rect x="222" y="428" width="1" height="4" fill="#00ff00"/>
<rect x="223" y="374" width="1" height="4" fill="#00ff00"/>
<rect x="223" y="428" width="1" height="5" fill="#00ff00"/>
<rect x="224" y="374" width="1" height="4" fill="#00ff00"/>
<rect x="224" y="428" width="1" height="3" fill="#00ff00"/>
<rect x="225" y="374" width="1" height="4" fill="#00ff00"/>
<rect x="225" y="428" width="1" height="3" fill="#00ff00"/>
<rect x="226" y="375" width="1" height="3" fill="#00ff00"/>
<rect x="226" y="428" width="1" height="3" fill="#00ff00"/>
<rect x="227" y="374" width="1" height="4" fill="#00ff00"/>
<rect x="227" y="428" width="1" height="3" fill="#00ff00"/>
<rect x="228" y="374" width="1" height="4" fill="#00ff00"/>
<rect x="228" y="428" width="1" height="3" fill="#00ff00"/>
<rect x="229" y="374" width="1" height="4" fill="#00ff00"/>
<rect x="229" y="428" width="1" height="3" fill="#00ff00"/>
<rect x="230" y="374" width="1" height="4" fill="#00ff00"/>
<rect x="230" y="428" width="1" height="4" fill="#00ff00"/>
<rect x="231" y="374" width="1" height="4" fill="#00ff00"/>
<rect x="231" y="428" width="1" height="3" fill="#00ff00"/>
<rect x="232" y="375" width="1" height="3" fill="#00ff00"/>
<rect x="232" y="428" width="1" height="3" fill="#00ff00"/>
<rect x="233" y="374" width="1" height="4" fill="#00ff00"/>
<rect x="233" y="428" width="1" height="3" fill="#00ff00"/>
<rect x="234" y="374" width="1" height="4" fill="#00ff00"/>
<rect x="234" y="428" width="1" height="3" fill="#00ff00"/>
<rect x="235" y="374" width="1" height="4" fill="#00ff00"/>
<rect x="235" y="428" width="1" height="3" fill="#00ff00"/>
<rect x="236" y="374" width="1" height="4" fill="#00ff00"/>
<rect x="236" y="428" width="1" height="4" fill="#00ff00"/>
<rect x="237" y="374" width="1" height="4" fill="#00ff00"/>
<rect x="237" y="428" width="1" height="3" fill="#00ff00"/>
<rect x="238" y="374" width="1" height="4" fill="#00ff00"/>
<rect x="238" y="428" width="1" height="3" fill="#00ff00"/>
<rect x="239" y="374" width="1" height="4" fill="#00ff00"/>
<rect x="239" y="428" width="1" height="3" fill="#00ff00"/>
<rect x="240" y="374" width="1" height="4" fill="#00ff00"/>
<rect x="240" y="428" width="1" height="3" fill="#00ff00"/>
<rect x="241" y="374" width="1" height="4" fill="#00ff00"/>
<rect x="241" y="428" width="1" height="3" fill="#00ff00"/>
<rect x="242" y="374" width="1" height="4" fill="#00ff00"/>
<rect x="242" y="428" width="1" height="3" fill="#00ff00"/>
<rect x="243" y="374" width="1" height="4" fill="#00ff00"/>
<rect x="243" y="428" width="1" height="1" fill="#00ff00"/>
<rect x="244" y="374" width="1" height="4" fill="#00ff00"/>
<rect x="244" y="428" width="1" height="3" fill="#00ff00"/>
<rect x="245" y="374" width="1" height="4" fill="#00ff00"/>
<rect x="245" y="428" width="1" height="1" fill="#00ff00"/>
<rect x="246" y="374" width="1" height="4" fill="#00ff00"/>
<rect x="246" y="428" width="1" height="3" fill="#00ff00"/>
<rect x="247" y="374" width="1" height="4" fill="#00ff00"/>
<rect x="247" y="428" width="1" height="3" fill="#00ff00"/>
<rect x="248" y="374" width="1" height="4" fill="#00ff00"/>
<rect x="248" y="428" width="1" height="3" fill="#00ff00"/>
<rect x="249" y="374" width="1" height="4" fill="#00ff00"/>
<rect x="249" y="428" width="1" height="3" fill="#00ff00"/>
<rect x="250" y="374" width="1" height="4" fill="#00ff00"/>
<rect x="250" y="428" width="1" height="3" fill="#00ff00"/>
<rect x="251" y="375" width="1" height="3" fill="#00ff00"/>
<rect x="251" y="428" width="1" height="3" fill="#00ff00"/>
<rect x="252" y="374" width="1" height="4" fill="#00ff00"/>
<rect x="252" y="428" width="1" height="3" fill="#00ff00"/>
<rect x="253" y="375" width="1" height="3" fill="#00ff00"/>
<rect x="253" y="428" width="1" height="3" fill="#00ff00"/>
<rect x="254" y="375" width="1" height="3" fill="#00ff00"/>
<rect x="254" y="428" width="1" height="2" fill="#00ff00"/>
<rect x="255" y="374" width="1" height="4" fill="#00ff00"/>
<rect x="255" y="428" width="1" height="3" fill="#00ff00"/>
<rect x="256" y="374" width="1" height="4" fill="#00ff00"/>
<rect x="256" y="428" width="1" height="3" fill="#00ff00"/>
<rect x="257" y="374" width="1" height="4" fill="#00ff00"/>
<rect x="257" y="428" width="1" height="3" fill="#00ff00"/>
<rect x="258" y="374" width="1" height="4" fill="#00ff00"/>
<rect x="258" y="428" width="1" height="3" fill="#00ff00"/>
<rect x="259" y="374" width="1" height="4" fill="#00ff00"/>
<rect x="259" y="428" width="1" height="3" fill="#00ff00"/>
<rect x="260" y="374" width="1" height="4" fill="#00ff00"/>
<rect x="260" y="428" width="1" height="2" fill="#00ff00"/>
<rect x="261" y="374" width="1" height="4" fill="#00ff00"/>
<rect x="261" y="428" width="1" height="3" fill="#00ff00"/>
<rect x="262" y="374" width="1" height="4" fill="#00ff00"/>
<rect x="262" y="428" width="1" height="5" fill="#00ff00"/>
<rect x="263" y="377" width="1" height="1" fill="#00ff00"/>
<rect x="263" y="428" width="1" height="4" fill="#00ff00"/>
<rect x="264" y="374" width="1" height="4" fill="#00ff00"/>
<rect x="264" y="428" width="1" height="3" fill="#00ff00"/>
<rect x="265" y="374" width="1" height="4" fill="#00ff00"/>
<rect x="265" y="428" width="1" height="3" fill="#00ff00"/>
<rect x="266" y="374" width="1" height="4" fill="#00ff00"/>
<rect x="266" y="428" width="1" height="3" fill="#00ff00"/>
<rect x="267" y="374" width="1" height="4" fill="#00ff00"/>
<rect x="267" y="428" width="1" height="2" fill="#00ff00"/>
<rect x="268" y="374" width="1" height="4" fill="#00ff00"/>
<rect x="268" y="428" width="1" height="3" fill="#00ff00"/>
<rect x="269" y="374" width="1" height="4" fill="#00ff00"/>
<rect x="269" y="428" width="1" height="3" fill="#00ff00"/>
<rect x="270" y="374" width="1" height="4" fill="#00ff00"/>
<rect x="270" y="428" width="1" height="3" fill="#00ff00"/>
<rect x="271" y="375" width="1" height="3" fill="#00ff00"/>
<rect x="271" y="428" width="1" height="3" fill="#00ff00"/>
<rect x="271" y="431" width="1" height="34" fill="#00ff00"/>
<rect x="271" y="463" width="10" height="2" fill="#00ff00"/>
<rect x="280" y="431" width="1" height="34" fill="#00ff00"/>
<rect x="280" y="378" width="71" height="50" fill="#00ff00"/>
<rect x="280" y="375" width="1" height="3" fill="#00ff00"/>
<rect x="280" y="428" width="1" height="5" fill="#00ff00"/>
<rect x="281" y="374" width="1" height="4" fill="#00ff00"/>
<rect x="281" y="428" width="1" height="3" fill="#00ff00"/>
<rect x="282" y="374" width="1" height="4" fill="#00ff00"/>
<rect x="282" y="428" width="1" height="3" fill="#00ff00"/>
<rect x="283" y="375" width="1" height="3" fill="#00ff00"/>
<rect x="283" y="428" width="1" height="3" fill="#00ff00"/>
<rect x="284" y="374" width="1" height="4" fill="#00ff00"/>
<rect x="284" y="428" width="1" height="3" fill="#00ff00"/>
<rect x="285" y="374" width="1" height="4" fill="#00ff00"/>
<rect x="285" y="428" width="1" height="3" fill="#00ff00"/>
<rect x="286" y="374" width="1" height="4" fill="#00ff00"/>
<rect x="286" y="428" width="1" height="5" fill="#00ff00"/>
<rect x="287" y="374" width="1" height="4" fill="#00ff00"/>
<rect x="287" y="428" width="1" height="2" fill="#00ff00"/>
<rect x="288" y="376" width="1" height="2" fill="#00ff00"/>
<rect x="288" y="428" width="1" height="4" fill="#00ff00"/>
<rect x="289" y="375" width="1" height="3" fill="#00ff00"/>
<rect x="289" y="428" width="1" height="3" fill="#00ff00"/>
<rect x="290" y="376" width="1" height="2" fill="#00ff00"/>
<rect x="290" y="428" width="1" height="3" fill="#00ff00"/>
<rect x="291" y="375" width="1" height="3" fill="#00ff00"/>
<rect x="291" y="428" width="1" height="3" fill="#00ff00"/>
<rect x="292" y="376" width="1" height="2" fill="#00ff00"/>
<rect x="292" y="428" width="1" height="4" fill="#00ff00"/>
<rect x="293" y="374" width="1" height="4" fill="#00ff00"/>
<rect x="293" y="428" width="1" height="2" fill="#00ff00"/>
<rect x="294" y="374" width="1" height="4" fill="#00ff00"/>
<rect x="294" y="428" width="1" height="2" fill="#00ff00"/>
<rect x="295" y="375" width="1" height="3" fill="#00ff00"/>
<rect x="295" y="428" width="1" height="3" fill="#00ff00"/>
<rect x="296" y="374" width="1" height="4" fill="#00ff00"/>
<rect x="296" y="428" width="1" height="3" fill="#00ff00"/>
<rect x="297" y="374" width="1" height="4" fill="#00ff00"/>
<rect x="297" y="428" width="1" height="4" fill="#00ff00"/>
<rect x="298" y="374" width="1" height="4" fill="#00ff00"/>
<rect x="298" y="428" width="1" height="3" fill="#00ff00"/>
<rect x="299" y="374" width="1" height="4" fill="#00ff00"/>
<rect x="299" y="428" width="1" height="3" fill="#00ff00"/>
<rect x="300" y="374" width="1" height="4" fill="#00ff00"/>
<rect x="300" y="428" width="1" height="3" fill="#00ff00"/>
<rect x="301" y="374" width="1" height="4" fill="#00ff00"/>
<rect x="301" y="428" width="1" height="4" fill="#00ff00"/>
<rect x="302" y="375" width="1" height="3" fill="#00ff00"/>
<rect x="302" y="428" width="1" height="3" fill="#00ff00"/>
<rect x="303" y="374" width="1" height="4" fill="#00ff00"/>
<rect x="303" y="428" width="1" height="4" fill="#00ff00"/>
<rect x="304" y="374" width="1" height="4" fill="#00ff00"/>
<rect x="304" y="428" width="1" height="3" fill="#00ff00"/>
<rect x="305" y="377" width="1" height="1" fill="#00ff00"/>
<rect x="305" y="428" width="1" height="3" fill="#00ff00"/>
<rect x="306" y="374" width="1" height="4" fill="#00ff00"/>
<rect x="306" y="428" width="1" height="4" fill="#00ff00"/>
<rect x="307" y="374" width="1" height="4" fill="#00ff00"/>
<rect x="307" y="428" width="1" height="3" fill="#00ff00"/>
<rect x="308" y="374" width="1" height="4" fill="#00ff00"/>
<rect x="308" y="428" width="1" height="3" fill="#00ff00"/>
<rect x="309" y="376" width="1" height="2" fill="#00ff00"/>
<rect x="309" y="428" width="1" height="3" fill="#00ff00"/>
<rect x="310" y="374" width="1" height="4" fill="#00ff00"/>
<rect x="310" y="428" width="1" height="3" fill="#00ff00"/>
<rect x="311" y="374" width="1" height="4" fill="#00ff00"/>
<rect x="311" y="428" width="1" height="3" fill="#00ff00"/>
<rect x="312" y="374" width="1" height="4" fill="#00ff00"/>
<rect x="312" y="428" width="1" height="3" fill="#00ff00"/>
<rect x="313" y="374" width="1" height="4" fill="#00ff00"/>
<rect x="313" y="428" width="1" height="3" fill="#00ff00"/>
<rect x="314" y="374" width="1" height="4" fill="#00ff00"/>
<rect x="314" y="428" width="1" height="1" fill="#00ff00"/>
<rect x="315" y="375" width="1" height="3" fill="#00ff00"/>
<rect x="315" y="428" width="1" height="3" fill="#00ff00"/>
<rect x="316" y="374" width="1" height="4" fill="#00ff00"/>
<rect x="316" y="428" width="1" height="3" fill="#00ff00"/>
<rect x="317" y="374" width="1" height="4" fill="#00ff00"/>
<rect x="317" y="428" width="1" height="3" fill="#00ff00"/>
<rect x="318" y="374" width="1" height="4" fill="#00ff00"/>
<rect x="318" y="428" width="1" height="3" fill="#00ff00"/>
<rect x="319" y="374" width="1" height="4" fill="#00ff00"/>
<rect x="319" y="428" width="1" height="3" fill="#00ff00"/>
<rect x="320" y="374" width="1" height="4" fill="#00ff00"/>
<rect x="320" y="428" width="1" height="3" fill="#00ff00"/>
<rect x="321" y="374" width="1" height="4" fill="#00ff00"/>
<rect x="321" y="428" width="1" height="3" fill="#00ff00"/>
<rect x="322" y="374" width="1" height="4" fill="#00ff00"/>
<rect x="322" y="428" width="1" height="3" fill="#00ff00"/>
<rect x="323" y="374" width="1" height="4" fill="#00ff00"/>
<rect x="323" y="428" width="1" height="1" fill="#00ff00"/>
<rect x="324" y="375" width="1" height="3" fill="#00ff00"/>
<rect x="324" y="428" width="1" height="2" fill="#00ff00"/>
<rect x="325" y="374" width="1" height="4" fill="#00ff00"/>
<rect x="325" y="428" width="1" height="3" fill="#00ff00"/>
<rect x="326" y="374" width="1" height="4" fill="#00ff00"/>
<rect x="326" y="428" width="1" height="3" fill="#00ff00"/>
<rect x="327" y="375" width="1" height="3" fill="#00ff00"/>
<rect x="327" y="428" width="1" height="3" fill="#00ff00"/>
<rect x="328" y="374" width="1" height="4" fill="#00ff00"/>
<rect x="328" y="428" width="1" height="3" fill="#00ff00"/>
<rect x="329" y="374" width="1" height="4" fill="#00ff00"/>
<rect x="329" y="428" width="1" height="1" fill="#00ff00"/>
<rect x="330" y="374" width="1" height="4" fill="#00ff00"/>
<rect x="330" y="428" width="1" height="3" fill="#00ff00"/>
<rect x="331" y="374" width="1" height="4" fill="#00ff00"/>
<rect x="331" y="428" width="1" height="3" fill="#00ff00"/>
<rect x="332" y="374" width="1" height="4" fill="#00ff00"/>
<rect x="332" y="428" width="1" height="4" fill="#00ff00"/>
<rect x="333" y="374" width="1" height="4" fill="#00ff00"/>
<rect x="333" y="428" width="1" height="3" fill="#00ff00"/>
<rect x="334" y="374" width="1" height="4" fill="#00ff00"/>
<rect x="334" y="428" width="1" height="3" fill="#00ff00"/>
<rect x="335" y="374" width="1" height="4" fill="#00ff00"/>
<rect x="335" y="428" width="1" height="2" fill="#00ff00"/>
<rect x="336" y="374" width="1" height="4" fill="#00ff00"/>
<rect x="336" y="428" width="1" height="3" fill="#00ff00"/>
<rect x="337" y="374" width="1" height="4" fill="#00ff00"/>
<rect x="337" y="428" width="1" height="2" fill="#00ff00"/>
<rect x="338" y="374" width="1" height="4" fill="#00ff00"/>
<rect x="338" y="428" width="1" height="3" fill="#00ff00"/>
<rect x="339" y="374" width="1" height="4" fill="#00ff00"/>
<rect x="339" y="428" width="1" height="3" fill="#00ff00"/>
<rect x="340" y="375" width="1" height="3" fill="#00ff00"/>
<rect x="340" y="428" width="1" height="3" fill="#00ff00"/>
<rect x="341" y="374" width="1" height="4" fill="#00ff00"/>
<rect x="341" y="428" width="1" height="2" fill="#00ff00"/>
<rect x="342" y="374" width="1" height="4" fill="#00ff00"/>
<rect x="342" y="428" width="1" height="3" fill="#00ff00"/>
<rect x="343" y="374" width="1" height="4" fill="#00ff00"/>
<rect x="343" y="428" width="1" height="3" fill="#00ff00"/>
<rect x="344" y="374" width="1" height="4" fill="#00ff00"/>
<rect x="344" y="428" width="1" height="3" fill="#00ff00"/>
<rect x="345" y="377" width="1" height="1" fill="#00ff00"/>
<rect x="345" y="428" width="1" height="2" fill="#00ff00"/>
<rect x="346" y="377" width="1" height="1" fill="#00ff00"/>
<rect x="346" y="428" width="1" height="3" fill="#00ff00"/>
<rect x="347" y="374" width="1" height="4" fill="#00ff00"/>
<rect x="347" y="428" width="1" height="3" fill="#00ff00"/>
<rect x="348" y="374" width="1" height="4" fill="#00ff00"/>
<rect x="348" y="428" width="1" height="3" fill="#00ff00"/>
<rect x="349" y="376" width="1" height="2" fill="#00ff00"/>
<rect x="349" y="428" width="1" height="4" fill="#00ff00"/>
<rect x="350" y="374" width="1" height="4" fill="#00ff00"/>
<rect x="350" y="428" width="1" height="3" fill="#00ff00"/>
<rect x="350" y="431" width="1" height="34" fill="#00ff00"/>
<rect x="350" y="463" width="10" height="2" fill="#00ff00"/>
<rect x="359" y="431" width="1" height="34" fill="#00ff00"/>
<rect x="359" y="378" width="71" height="50" fill="#00ff00"/>
<rect x="359" y="376" width="1" height="2" fill="#00ff00"/>
<rect x="359" y="428" width="1" height="3" fill="#00ff00"/>
<rect x="360" y="374" width="1" height="4" fill="#00ff00"/>
<rect x="360" y="428" width="1" height="5" fill="#00ff00"/>
<rect x="361" y="374" width="1" height="4" fill="#00ff00"/>
<rect x="361" y="428" width="1" height="3" fill="#00ff00"/>
<rect x="362" y="374" width="1" height="4" fill="#00ff00"/>
<rect x="362" y="428" width="1" height="4" fill="#00ff00"/>
<rect x="363" y="375" width="1" height="3" fill="#00ff00"/>
<rect x="363" y="428" width="1" height="3" fill="#00ff00"/>
<rect x="364" y="374" width="1" height="4" fill="#00ff00"/>
<rect x="364" y="428" width="1" height="3" fill="#00ff00"/>
<rect x="365" y="374" width="1" height="4" fill="#00ff00"/>
<rect x="365" y="428" width="1" height="2" fill="#00ff00"/>
<rect x="366" y="374" width="1" height="4" fill="#00ff00"/>
<rect x="366" y="428" width="1" height="3" fill="#00ff00"/>
<rect x="367" y="374" width="1" height="4" fill="#00ff00"/>
<rect x="367" y="428" width="1" height="3" fill="#00ff00"/>
<rect x="368" y="374" width="1" height="4" fill="#00ff00"/>
<rect x="368" y="428" width="1" height="3" fill="#00ff00"/>
<rect x="369" y="374" width="1" height="4" fill="#00ff00"/>
<rect x="369" y="428" width="1" height="4" fill="#00ff00"/>
<rect x="370" y="374" width="1" height="4" fill="#00ff00"/>
<rect x="370" y="428" width="1" height="2" fill="#00ff00"/>
<rect x="371" y="375" width="1" height="3" fill="#00ff00"/>
<rect x="371" y="428" width="1" height="4" fill="#00ff00"/>
<rect x="372" y="374" width="1" height="4" fill="#00ff00"/>
<rect x="372" y="428" width="1" height="3" fill="#00ff00"/>
<rect x="373" y="374" width="1" height="4" fill="#00ff00"/>
<rect x="373" y="428" width="1" height="3" fill="#00ff00"/>
<rect x="374" y="374" width="1" height="4" fill="#00ff00"/>
<rect x="374" y="428" width="1" height="4" fill="#00ff00"/>
<rect x="375" y="374" width="1" height="4" fill="#00ff00"/>
<rect x="375" y="428" width="1" height="3" fill="#00ff00"/>
<rect x="376" y="376" width="1" height="2" fill="#00ff00"/>
<rect x="376" y="428" width="1" height="3" fill="#00ff00"/>
<rect x="377" y="374" width="1" height="4" fill="#00ff00"/>
<rect x="377" y="428" width="1" height="3" fill="#00ff00"/>
<rect x="378" y="374" width="1" height="4" fill="#00ff00"/>
<rect x="378" y="428" width="1" height="3" fill="#00ff00"/>
<rect x="379" y="374" width="1" height="4" fill="#00ff00"/>
<rect x="379" y="428" width="1" height="3" fill="#00ff00"/>
<rect x="380" y="374" width="1" height="4" fill="#00ff00"/>
<rect x="380" y="428" width="1" height="5" fill="#00ff00"/>
<rect x="381" y="374" width="1" height="4" fill="#00ff00"/>
<rect x="381" y="428" width="1" height="3" fill="#00ff00"/>
<rect x="382" y="374" width="1" height="4" fill="#00ff00"/>
<rect x="382" y="428" width="1" height="4" fill="#00ff00"/>
<rect x="383" y="374" width="1" height="4" fill="#00ff00"/>
<rect x="383" y="428" width="1" height="3" fill="#00ff00"/>
<rect x="384" y="374" width="1" height="4" fill="#00ff00"/>
<rect x="384" y="428" width="1" height="3" fill="#00ff00"/>
<rect x="385" y="374" width="1" height="4" fill="#00ff00"/>
<rect x="385" y="428" width="1" height="4" fill="#00ff00"/>
<rect x="386" y="374" width="1" height="4" fill="#00ff00"/>
<rect x="386" y="428" width="1" height="3" fill="#00ff00"/>
<rect x="387" y="374" width="1" height="4" fill="#00ff00"/>
<rect x="387" y="428" width="1" height="3" fill="#00ff00"/>
<rect x="388" y="375" width="1" height="3" fill="#00ff00"/>
<rect x="388" y="428" width="1" height="5" fill="#00ff00"/>
<rect x="389" y="374" width="1" height="4" fill="#00ff00"/>
<rect x="389" y="428" width="1" height="3" fill="#00ff00"/>
<rect x="390" y="374" width="1" height="4" fill="#00ff00"/>
<rect x="390" y="428" width="1" height="1" fill="#00ff00"/>
<rect x="391" y="374" width="1" height="4" fill="#00ff00"/>
<rect x="391" y="428" width="1" height="3" fill="#00ff00"/>
<rect x="392" y="376" width="1" height="2" fill="#00ff00"/>
<rect x="392" y="428" width="1" height="3" fill="#00ff00"/>
<rect x="393" y="374" width="1" height="4" fill="#00ff00"/>
<rect x="393" y="428" width="1" height="5" fill="#00ff00"/>
<rect x="394" y="374" width="1" height="4" fill="#00ff00"/>
<rect x="394" y="428" width="1" height="5" fill="#00ff00"/>
<rect x="395" y="374" width="1" height="4" fill="#00ff00"/>
<rect x="395" y="428" width="1" height="5" fill="#00ff00"/>
<rect x="396" y="374" width="1" height="4" fill="#00ff00"/>
<rect x="396" y="428" width="1" height="4" fill="#00ff00"/>
<rect x="397" y="374" width="1" height="4" fill="#00ff00"/>
<rect x="397" y="428" width="1" height="2" fill="#00ff00"/>
<rect x="398" y="375" width="1" height="3" fill="#00ff00"/>
<rect x="398" y="428" width="1" height="3" fill="#00ff00"/>
<rect x="399" y="374" width="1" height="4" fill="#00ff00"/>
<rect x="399" y="428" width="1" height="3" fill="#00ff00"/>
<rect x="400" y="374" width="1" height="4" fill="#00ff00"/>
<rect x="400" y="428" width="1" height="3" fill="#00ff00"/>
<rect x="401" y="376" width="1" height="2" fill="#00ff00"/>
<rect x="401" y="428" width="1" height="3" fill="#00ff00"/>
<rect x="402" y="375" width="1" height="3" fill="#00ff00"/>
<rect x="402" y="428" width="1" height="3" fill="#00ff00"/>
<rect x="403" y="374" width="1" height="4" fill="#00ff00"/>
<rect x="403" y="428" width="1" height="3" fill="#00ff00"/>
<rect x="404" y="374" width="1" height="4" fill="#00ff00"/>
<rect x="404" y="428" width="1" height="3" fill="#00ff00"/>
<rect x="405" y="374" width="1" height="4" fill="#00ff00"/>
<rect x="405" y="428" width="1" height="3" fill="#00ff00"/>
<rect x="406" y="374" width="1" height="4" fill="#00ff00"/>
<rect x="406" y="428" width="1" height="5" fill="#00ff00"/>
<rect x="407" y="374" width="1" height="4" fill="#00ff00"/>
<rect x="407" y="428" width="1" height="4" fill="#00ff00"/>
<rect x="408" y="374" width="1" height="4" fill="#00ff00"/>
<rect x="408" y="428" width="1" height="3" fill="#00ff00"/>
<rect x="409" y="376" width="1" height="2" fill="#00ff00"/>
<rect x="409" y="428" width="1" height="3" fill="#00ff00"/>
<rect x="410" y="374" width="1" height="4" fill="#00ff00"/>
<rect x="410" y="428" width="1" height="3" fill="#00ff00"/>
<rect x="411" y="376" width="1" height="2" fill="#00ff00"/>
<rect x="411" y="428" width="1" height="1" fill="#00ff00"/>
<rect x="412" y="374" width="1" height="4" fill="#00ff00"/>
<rect x="412" y="428" width="1" height="3" fill="#00ff00"/>
<rect x="413" y="377" width="1" height="1" fill="#00ff00"/>
<rect x="413" y="428" width="1" height="3" fill="#00ff00"/>
<rect x="414" y="374" width="1" height="4" fill="#00ff00"/>
<rect x="414" y="428" width="1" height="3" fill="#00ff00"/>
<rect x="415" y="376" width="1" height="2" fill="#00ff00"/>
<rect x="415" y="428" width="1" height="3" fill="#00ff00"/>
<rect x="416" y="375" width="1" height="3" fill="#00ff00"/>
<rect x="416" y="428" width="1" height="3" fill="#00ff00"/>
<rect x="417" y="374" width="1" height="4" fill="#00ff00"/>
<rect x="417" y="428" width="1" height="2" fill="#00ff00"/>
<rect x="418" y="374" width="1" height="4" fill="#00ff00"/>
<rect x="418" y="428" width="1" height="1" fill="#00ff00"/>
<rect x="419" y="374" width="1" height="4" fill="#00ff00"/>
<rect x="419" y="428" width="1" height="2" fill="#00ff00"/>
<rect x="420" y="374" width="1" height="4" fill="#00ff00"/>
<rect x="420" y="428" width="1" height="3" fill="#00ff00"/>
<rect x="421" y="374" width="1" height="4" fill="#00ff00"/>
<rect x="421" y="428" width="1" height="3" fill="#00ff00"/>
<rect x="422" y="375" width="1" height="3" fill="#00ff00"/>
<rect x="422" y="428" width="1" height="1" fill="#00ff00"/>
<rect x="423" y="374" width="1" height="4" fill="#00ff00"/>
<rect x="423" y="428" width="1" height="4" fill="#00ff00"/>
<rect x="424" y="374" width="1" height="4" fill="#00ff00"/>
<rect x="424" y="428" width="1" height="1" fill="#00ff00"/>
<rect x="425" y="374" width="1" height="4" fill="#00ff00"/>
<rect x="425" y="428" width="1" height="4" fill="#00ff00"/>
<rect x="426" y="374" width="1" height="4" fill="#00ff00"/>
<rect x="426" y="428" width="1" height="3" fill="#00ff00"/>
<rect x="427" y="376" width="1" height="2" fill="#00ff00"/>
<rect x="427" y="428" width="1" height="4" fill="#00ff00"/>
<rect x="428" y="374" width="1" height="4" fill="#00ff00"/>
<rect x="428" y="428" width="1" height="3" fill="#00ff00"/>
<rect x="429" y="377" width="1" height="1" fill="#00ff00"/>
<rect x="429" y="428" width="1" height="3" fill="#00ff00"/>
<rect x="429" y="431" width="1" height="34" fill="#00ff00"/>
<rect x="429" y="463" width="10" height="2" fill="#00ff00"/>
<rect x="438" y="431" width="1" height="34" fill="#00ff00"/>
<rect x="438" y="378" width="71" height="50" fill="#00ff00"/>
<rect x="438" y="374" width="1" height="4" fill="#00ff00"/>
<rect x="438" y="428" width="1" height="2" fill="#00ff00"/>
<rect x="439" y="374" width="1" height="4" fill="#00ff00"/>
<rect x="439" y="428" width="1" height="5" fill="#00ff00"/>
<rect x="440" y="377" width="1" height="1" fill="#00ff00"/>
<rect x="440" y="428" width="1" height="3" fill="#00ff00"/>
<rect x="441" y="374" width="1" height="4" fill="#00ff00"/>
<rect x="441" y="428" width="1" height="2" fill="#00ff00"/>
<rect x="442" y="375" width="1" height="3" fill="#00ff00"/>
<rect x="442" y="428" width="1" height="4" fill="#00ff00"/>
<rect x="443" y="374" width="1" height="4" fill="#00ff00"/>
<rect x="443" y="428" width="1" height="3" fill="#00ff00"/>
<rect x="444" y="374" width="1" height="4" fill="#00ff00"/>
<rect x="444" y="428" width="1" height="2" fill="#00ff00"/>
<rect x="445" y="374" width="1" height="4" fill="#00ff00"/>
<rect x="445" y="428" width="1" height="3" fill="#00ff00"/>
<rect x="446" y="374" width="1" height="4" fill="#00ff00"/>
<rect x="446" y="428" width="1" height="3" fill="#00ff00"/>
<rect x="447" y="374" width="1" height="4" fill="#00ff00"/>
<rect x="447" y="428" width="1" height="4" fill="#00ff00"/>
<rect x="448" y="374" width="1" height="4" fill="#00ff00"/>
<rect x="448" y="428" width="1" height="3" fill="#00ff00"/>
<rect x="449" y="374" width="1" height="4" fill="#00ff00"/>
<rect x="449" y="428" width="1" height="4" fill="#00ff00"/>
<rect x="450" y="374" width="1" height="4" fill="#00ff00"/>
<rect x="450" y="428" width="1" height="3" fill="#00ff00"/>
<rect x="451" y="374" width="1" height="4" fill="#00ff00"/>
<rect x="451" y="428" width="1" height="3" fill="#00ff00"/>
<rect x="452" y="374" width="1" height="4" fill="#00ff00"/>
<rect x="452" y="428" width="1" height="4" fill="#00ff00"/>
<rect x="453" y="374" width="1" height="4" fill="#00ff00"/>
<rect x="453" y="428" width="1" height="3" fill="#00ff00"/>
<rect x="454" y="374" width="1" height="4" fill="#00ff00"/>
<rect x="454" y="428" width="1" height="2" fill="#00ff00"/>
<rect x="455" y="377" width="1" height="1" fill="#00ff00"/>
<rect x="455" y="428" width="1" height="3" fill="#00ff00"/>
<rect x="456" y="374" width="1" height="4" fill="#00ff00"/>
<rect x="456" y="428" width="1" height="5" fill="#00ff00"/>
<rect x="457" y="374" width="1" height="4" fill="#00ff00"/>
<rect x="457" y="428" width="1" height="3" fill="#00ff00"/>
<rect x="458" y="375" width="1" height="3" fill="#00ff00"/>
<rect x="458" y="428" width="1" height="3" fill="#00ff00"/>
<rect x="459" y="374" width="1" height="4" fill="#00ff00"/>
<rect x="459" y="428" width="1" height="3" fill="#00ff00"/>
<rect x="460" y="376" width="1" height="2" fill="#00ff00"/>
<rect x="460" y="428" width="1" height="3" fill="#00ff00"/>
<rect x="461" y="374" width="1" height="4" fill="#00ff00"/>
<rect x="461" y="428" width="1" height="3" fill="#00ff00"/>
<rect x="462" y="374" width="1" height="4" fill="#00ff00"/>
<rect x="462" y="428" width="1" height="3" fill="#00ff00"/>
<rect x="463" y="374" width="1" height="4" fill="#00ff00"/>
<rect x="463" y="428" width="1" height="3" fill="#00ff00"/>
<rect x="464" y="375" width="1" height="3" fill="#00ff00"/>
<rect x="464" y="428" width="1" height="3" fill="#00ff00"/>
<rect x="465" y="374" width="1" height="4" fill="#00ff00"/>
<rect x="465" y="428" width="1" height="3" fill="#00ff00"/>
<rect x="466" y="374" width="1" height="4" fill="#00ff00"/>
<rect x="466" y="428" width="1" height="3" fill="#00ff00"/>
<rect x="467" y="374" width="1" height="4" fill="#00ff00"/>
<rect x="467" y="428" width="1" height="4" fill="#00ff00"/>
<rect x="468" y="374" width="1" height="4" fill="#00ff00"/>
<rect x="468" y="428" width="1" height="2" fill="#00ff00"/>
<rect x="469" y="377" width="1" height="1" fill="#00ff00"/>
<rect x="469" y="428" width="1" height="5" fill="#00ff00"/>
<rect x="470" y="374" width="1" height="4" fill="#00ff00"/>
<rect x="470" y="428" width="1" height="3" fill="#00ff00"/>
<rect x="471" y="375" width="1" height="3" fill="#00ff00"/>
<rect x="471" y="428" width="1" height="4" fill="#00ff00"/>
<rect x="472" y="374" width="1" height="4" fill="#00ff00"/>
<rect x="472" y="428" width="1" height="2" fill="#00ff00"/>
<rect x="473" y="375" width="1" height="3" fill="#00ff00"/>
<rect x="473" y="428" width="1" height="3" fill="#00ff00"/>
<rect x="474" y="374" width="1" height="4" fill="#00ff00"/>
<rect x="474" y="428" width="1" height="3" fill="#00ff00"/>
<rect x="475" y="374" width="1" height="4" fill="#00ff00"/>
<rect x="475" y="428" width="1" height="5" fill="#00ff00"/>
<rect x="476" y="374" width="1" height="4" fill="#00ff00"/>
<rect x="476" y="428" width="1" height="3" fill="#00ff00"/>
<rect x="477" y="375" width="1" height="3" fill="#00ff00"/>
<rect x="477" y="428" width="1" height="5" fill="#00ff00"/>
<rect x="478" y="374" width="1" height="4" fill="#00ff00"/>
<rect x="478" y="428" width="1" height="3" fill="#00ff00"/>
<rect x="479" y="374" width="1" height="4" fill="#00ff00"/>
<rect x="479" y="428" width="1" height="5" fill="#00ff00"/>
<rect x="480" y="374" width="1" height="4" fill="#00ff00"/>
<rect x="480" y="428" width="1" height="5" fill="#00ff00"/>
<rect x="481" y="374" width="1" height="4" fill="#00ff00"/>
<rect x="481" y="428" width="1" height="3" fill="#00ff00"/>
<rect x="482" y="376" width="1" height="2" fill="#00ff00"/>
<rect x="482" y="428" width="1" height="3" fill="#00ff00"/>
<rect x="483" y="374" width="1" height="4" fill="#00ff00"/>
<rect x="483" y="428" width="1" height="5" fill="#00ff00"/>
<rect x="484" y="374" width="1" height="4" fill="#00ff00"/>
<rect x="484" y="428" width="1" height="3" fill="#00ff00"/>
<rect x="485" y="374" width="1" height="4" fill="#00ff00"/>
<rect x="485" y="428" width="1" height="3" fill="#00ff00"/>
<rect x="486" y="374" width="1" height="4" fill="#00ff00"/>
<rect x="486" y="428" width="1" height="3" fill="#00ff00"/>
<rect x="487" y="374" width="1" height="4" fill="#00ff00"/>
<rect x="487" y="428" width="1" height="3" fill="#00ff00"/>
<rect x="488" y="374" width="1" height="4" fill="#00ff00"/>
<rect x="488" y="428" width="1" height="3" fill="#00ff00"/>
<rect x="489" y="374" width="1" height="4" fill="#00ff00"/>
<rect x="489" y="428" width="1" height="3" fill="#00ff00"/>
<rect x="490" y="374" width="1" height="4" fill="#00ff00"/>
<rect x="490" y="428" width="1" height="3" fill="#00ff00"/>
<rect x="491" y="374" width="1" height="4" fill="#00ff00"/>
<rect x="491" y="428" width="1" height="3" fill="#00ff00"/>
<rect x="492" y="374" width="1" height="4" fill="#00ff00"/>
<rect x="492" y="428" width="1" height="3" fill="#00ff00"/>
<rect x="493" y="375" width="1" height="3" fill="#00ff00"/>
<rect x="493" y="428" width="1" height="3" fill="#00ff00"/>
<rect x="494" y="374" width="1" height="4" fill="#00ff00"/>
<rect x="494" y="428" width="1" height="3" fill="#00ff00"/>
<rect x="495" y="374" width="1" height="4" fill="#00ff00"/>
<rect x="495" y="428" width="1" height="3" fill="#00ff00"/>
<rect x="496" y="374" width="1" height="4" fill="#00ff00"/>
<rect x="496" y="428" width="1" height="3" fill="#00ff00"/>
<rect x="497" y="374" width="1" height="4" fill="#00ff00"/>
<rect x="497" y="428" width="1" height="4" fill="#00ff00"/>
<rect x="498" y="374" width="1" height="4" fill="#00ff00"/>
<rect x="498" y="428" width="1" height="3" fill="#00ff00"/>
<rect x="499" y="375" width="1" height="3" fill="#00ff00"/>
<rect x="499" y="428" width="1" height="5" fill="#00ff00"/>
<rect x="500" y="374" width="1" height="4" fill="#00ff00"/>
<rect x="500" y="428" width="1" height="3" fill="#00ff00"/>
<rect x="501" y="374" width="1" height="4" fill="#00ff00"/>
<rect x="501" y="428" width="1" height="3" fill="#00ff00"/>
<rect x="502" y="374" width="1" height="4" fill="#00ff00"/>
<rect x="502" y="428" width="1" height="3" fill="#00ff00"/>
<rect x="503" y="374" width="1" height="4" fill="#00ff00"/>
<rect x="503" y="428" width="1" height="4" fill="#00ff00"/>
<rect x="504" y="374" width="1" height="4" fill="#00ff00"/>
<rect x="504" y="428" width="1" height="2" fill="#00ff00"/>
<rect x="505" y="374" width="1" height="4" fill="#00ff00"/>
<rect x="505" y="428" width="1" height="1" fill="#00ff00"/>
<rect x="506" y="374" width="1" height="4" fill="#00ff00"/>
<rect x="506" y="428" width="1" height="3" fill="#00ff00"/>
<rect x="507" y="374" width="1" height="4" fill="#00ff00"/>
<rect x="507" y="428" width="1" height="2" fill="#00ff00"/>
<rect x="508" y="374" width="1" height="4" fill="#00ff00"/>
<rect x="508" y="428" width="1" height="3" fill="#00ff00"/>
<rect x="508" y="431" width="1" height="34" fill="#00ff00"/>
<rect x="508" y="463" width="9" height="2" fill="#00ff00"/>
<rect x="516" y="431" width="1" height="34" fill="#00ff00"/>
<rect x="516" y="378" width="70" height="50" fill="#00ff00"/>
<rect x="516" y="374" width="1" height="4" fill="#00ff00"/>
<rect x="516" y="428" width="1" height="1" fill="#00ff00"/>
<rect x="517" y="374" width="1" height="4" fill="#00ff00"/>
<rect x="517" y="428" width="1" height="3" fill="#00ff00"/>
<rect x="518" y="376" width="1" height="2" fill="#00ff00"/>
<rect x="518" y="428" width="1" height="3" fill="#00ff00"/>
<rect x="519" y="374" width="1" height="4" fill="#00ff00"/>
<rect x="519" y="428" width="1" height="3" fill="#00ff00"/>
<rect x="520" y="374" width="1" height="4" fill="#00ff00"/>
<rect x="520" y="428" width="1" height="3" fill="#00ff00"/>
<rect x="521" y="374" width="1" height="4" fill="#00ff00"/>
<rect x="521" y="428" width="1" height="5" fill="#00ff00"/>
<rect x="522" y="376" width="1" height="2" fill="#00ff00"/>
<rect x="522" y="428" width="1" height="5" fill="#00ff00"/>
<rect x="523" y="374" width="1" height="4" fill="#00ff00"/>
<rect x="523" y="428" width="1" height="3" fill="#00ff00"/>
<rect x="524" y="374" width="1" height="4" fill="#00ff00"/>
<rect x="524" y="428" width="1" height="2" fill="#00ff00"/>
<rect x="525" y="375" width="1" height="3" fill="#00ff00"/>
<rect x="525" y="428" width="1" height="3" fill="#00ff00"/>
<rect x="526" y="374" width="1" height="4" fill="#00ff00"/>
<rect x="526" y="428" width="1" height="3" fill="#00ff00"/>
<rect x="527" y="374" width="1" height="4" fill="#00ff00"/>
<rect x="527" y="428" width="1" height="3" fill="#00ff00"/>
<rect x="528" y="374" width="1" height="4" fill="#00ff00"/>
<rect x="528" y="428" width="1" height="3" fill="#00ff00"/>
<rect x="529" y="374" width="1" height="4" fill="#00ff00"/>
<rect x="529" y="428" width="1" height="3" fill="#00ff00"/>
<rect x="530" y="374" width="1" height="4" fill="#00ff00"/>
<rect x="530" y="428" width="1" height="3" fill="#00ff00"/>
<rect x="531" y="374" width="1" height="4" fill="#00ff00"/>
<rect x="531" y="428" width="1" height="2" fill="#00ff00"/>
<rect x="532" y="374" width="1" height="4" fill="#00ff00"/>
<rect x="532" y="428" width="1" height="3" fill="#00ff00"/>
<rect x="533" y="374" width="1" height="4" fill="#00ff00"/>
<rect x="533" y="428" width="1" height="3" fill="#00ff00"/>
<rect x="534" y="375" width="1" height="3" fill="#00ff00"/>
<rect x="534" y="428" width="1" height="3" fill="#00ff00"/>
<rect x="535" y="374" width="1" height="4" fill="#00ff00"/>
<rect x="535" y="428" width="1" height="2" fill="#00ff00"/>
<rect x="536" y="374" width="1" height="4" fill="#00ff00"/>
<rect x="536" y="428" width="1" height="3" fill="#00ff00"/>
<rect x="537" y="374" width="1" height="4" fill="#00ff00"/>
<rect x="537" y="428" width="1" height="3" fill="#00ff00"/>
<rect x="538" y="374" width="1" height="4" fill="#00ff00"/>
<rect x="538" y="428" width="1" height="3" fill="#00ff00"/>
<rect x="539" y="376" width="1" height="2" fill="#00ff00"/>
<rect x="539" y="428" width="1" height="4" fill="#00ff00"/>
<rect x="540" y="374" width="1" height="4" fill="#00ff00"/>
<rect x="540" y="428" width="1" height="3" fill="#00ff00"/>
<rect x="541" y="375" width="1" height="3" fill="#00ff00"/>
<rect x="541" y="428" width="1" height="3" fill="#00ff00"/>
<rect x="542" y="374" width="1" height="4" fill="#00ff00"/>
<rect x="542" y="428" width="1" height="3" fill="#00ff00"/>
<rect x="543" y="376" width="1" height="2" fill="#00ff00"/>
<rect x="543" y="428" width="1" height="2" fill="#00ff00"/>
<rect x="544" y="374" width="1" height="4" fill="#00ff00"/>
<rect x="544" y="428" width="1" height="3" fill="#00ff00"/>
<rect x="545" y="376" width="1" height="2" fill="#00ff00"/>
<rect x="545" y="428" width="1" height="3" fill="#00ff00"/>
<rect x="546" y="374" width="1" height="4" fill="#00ff00"/>
<rect x="546" y="428" width="1" height="3" fill="#00ff00"/>
<rect x="547" y="374" width="1" height="4" fill="#00ff00"/>
<rect x="547" y="428" width="1" height="3" fill="#00ff00"/>
<rect x="548" y="374" width="1" height="4" fill="#00ff00"/>
<rect x="548" y="428" width="1" height="3" fill="#00ff00"/>
<rect x="549" y="374" width="1" height="4" fill="#00ff00"/>
<rect x="549" y="428" width="1" height="3" fill="#00ff00"/>
<rect x="550" y="374" width="1" height="4" fill="#00ff00"/>
<rect x="550" y="428" width="1" height="3" fill="#00ff00"/>
<rect x="551" y="374" width="1" height="4" fill="#00ff00"/>
<rect x="551" y="428" width="1" height="3" fill="#00ff00"/>
<rect x="552" y="374" width="1" height="4" fill="#00ff00"/>
<rect x="552" y="428" width="1" height="5" fill="#00ff00"/>
<rect x="553" y="374" width="1" height="4" fill="#00ff00"/>
<rect x="553" y="428" width="1" height="4" fill="#00ff00"/>
<rect x="554" y="374" width="1" height="4" fill="#00ff00"/>
<rect x="554" y="428" width="1" height="3" fill="#00ff00"/>
<rect x="555" y="374" width="1" height="4" fill="#00ff00"/>
<rect x="555" y="428" width="1" height="3" fill="#00ff00"/>
<rect x="556" y="374" width="1" height="4" fill="#00ff00"/>
<rect x="556" y="428" width="1" height="3" fill="#00ff00"/>
<rect x="557" y="374" width="1" height="4" fill="#00ff00"/>
<rect x="557" y="428" width="1" height="3" fill="#00ff00"/>
<rect x="558" y="374" width="1" height="4" fill="#00ff00"/>
<rect x="558" y="428" width="1" height="3" fill="#00ff00"/>
<rect x="559" y="374" width="1" height="4" fill="#00ff00"/>
<rect x="559" y="428" width="1" height="3" fill="#00ff00"/>
<rect x="560" y="374" width="1" height="4" fill="#00ff00"/>
<rect x="560" y="428" width="1" height="1" fill="#00ff00"/>
<rect x="561" y="374" width="1" height="4" fill="#00ff00"/>
<rect x="561" y="428" width="1" height="3" fill="#00ff00"/>
<rect x="562" y="374" width="1" height="4" fill="#00ff00"/>
<rect x="562" y="428" width="1" height="3" fill="#00ff00"/>
<rect x="563" y="374" width="1" height="4" fill="#00ff00"/>
<rect x="563" y="428" width="1" height="3" fill="#00ff00"/>
<rect x="564" y="374" width="1" height="4" fill="#00ff00"/>
<rect x="564" y="428" width="1" height="3" fill="#00ff00"/>
<rect x="565" y="377" width="1" height="1" fill="#00ff00"/>
<rect x="565" y="428" width="1" height="3" fill="#00ff00"/>
<rect x="566" y="376" width="1" height="2" fill="#00ff00"/>
<rect x="566" y="428" width="1" height="3" fill="#00ff00"/>
<rect x="567" y="374" width="1" height="4" fill="#00ff00"/>
<rect x="567" y="428" width="1" height="4" fill="#00ff00"/>
<rect x="568" y="374" width="1" height="4" fill="#00ff00"/>
<rect x="568" y="428" width="1" height="3" fill="#00ff00"/>
<rect x="569" y="374" width="1" height="4" fill="#00ff00"/>
<rect x="569" y="428" width="1" height="3" fill="#00ff00"/>
<rect x="570" y="374" width="1" height="4" fill="#00ff00"/>
<rect x="570" y="428" width="1" height="2" fill="#00ff00"/>
<rect x="571" y="374" width="1" height="4" fill="#00ff00"/>
<rect x="571" y="428" width="1" height="3" fill="#00ff00"/>
<rect x="572" y="375" width="1" height="3" fill="#00ff00"/>
<rect x="572" y="428" width="1" height="4" fill="#00ff00"/>
<rect x="573" y="374" width="1" height="4" fill="#00ff00"/>
<rect x="573" y="428" width="1" height="3" fill="#00ff00"/>
<rect x="574" y="374" width="1" height="4" fill="#00ff00"/>
<rect x="574" y="428" width="1" height="3" fill="#00ff00"/>
<rect x="575" y="374" width="1" height="4" fill="#00ff00"/>
<rect x="575" y="428" width="1" height="3" fill="#00ff00"/>
<rect x="576" y="374" width="1" height="4" fill="#00ff00"/>
<rect x="576" y="428" width="1" height="3" fill="#00ff00"/>
<rect x="577" y="374" width="1" height="4" fill="#00ff00"/>
<rect x="577" y="428" width="1" height="3" fill="#00ff00"/>
<rect x="578" y="374" width="1" height="4" fill="#00ff00"/>
<rect x="578" y="428" width="1" height="3" fill="#00ff00"/>
<rect x="579" y="374" width="1" height="4" fill="#00ff00"/>
<rect x="579" y="428" width="1" height="3" fill="#00ff00"/>
<rect x="580" y="374" width="1" height="4" fill="#00ff00"/>
<rect x="580" y="428" width="1" height="3" fill="#00ff00"/>
<rect x="581" y="375" width="1" height="3" fill="#00ff00"/>
<rect x="581" y="428" width="1" height="3" fill="#00ff00"/>
<rect x="582" y="374" width="1" height="4" fill="#00ff00"/>
<rect x="582" y="428" width="1" height="3" fill="#00ff00"/>
<rect x="583" y="374" width="1" height="4" fill="#00ff00"/>
<rect x="583" y="428" width="1" height="3" fill="#00ff00"/>
<rect x="584" y="374" width="1" height="4" fill="#00ff00"/>
<rect x="584" y="428" width="1" height="3" fill="#00ff00"/>
<rect x="585" y="374" width="1" height="4" fill="#00ff00"/>
<rect x="585" y="428" width="1" height="3" fill="#00ff00"/>
<rect x="585" y="431" width="1" height="2" fill="#00ff00"/>
<rect x="586" y="388" width="1" height="77" fill="#00ff00"/>
<rect x="586" y="463" width="203" height="2" fill="#00ff00"/>
<rect x="613" y="462" width="1" height="1" fill="#00ff00"/>
<rect x="614" y="462" width="1" height="1" fill="#00ff00"/>
<rect x="617" y="462" width="1" height="1" fill="#00ff00"/>
<rect x="620" y="462" width="1" height="1" fill="#00ff00"/>
<rect x="641" y="462" width="2" height="1" fill="#00ff00"/>
<rect x="653" y="465" width="1" height="1" fill="#00ff00"/>
<rect x="660" y="462" width="2" height="1" fill="#00ff00"/>
<rect x="697" y="462" width="2" height="1" fill="#00ff00"/>
<rect x="698" y="462" width="1" height="1" fill="#00ff00"/>
<rect x="733" y="462" width="2" height="1" fill="#00ff00"/>
<rect x="760" y="462" width="2" height="1" fill="#00ff00"/>
<rect x="764" y="462" width="2" height="1" fill="#00ff00"/>
<rect x="775" y="462" width="1" height="1" fill="#00ff00"/>
<rect x="17" y="154" width="105" height="2" fill="#0000ff"/>
<rect x="74" y="153" width="2" height="1" fill="#0000ff"/>
<rect x="107" y="156" width="1" height="1" fill="#0000ff"/>
<rect x="119" y="156" width="1" height="1" fill="#0000ff"/>
<rect x="122" y="154" width="474" height="2" fill="#0000ff"/>
<rect x="128" y="156" width="1" height="1" fill="#0000ff"/>
<rect x="149" y="156" width="1" height="1" fill="#0000ff"/>
<rect x="161" y="155" width="1" height="1" fill="#d8d000"/>
<rect x="166" y="155" width="1" height="1" fill="#d8d000"/>
<rect x="167" y="156" width="1" height="1" fill="#0000ff"/>
<rect x="171" y="153" width="2" height="1" fill="#0000ff"/>
<rect x="190" y="155" width="1" height="1" fill="#d8d000"/>
<rect x="200" y="155" width="1" height="1" fill="#d8d000"/>
<rect x="211" y="156" width="1" height="1" fill="#0000ff"/>
<rect x="215" y="155" width="1" height="1" fill="#d8d000"/>
<rect x="240" y="155" width="1" height="1" fill="#d8d000"/>
<rect x="242" y="155" width="1" height="1" fill="#d8d000"/>
<rect x="260" y="155" width="1" height="1" fill="#d8d000"/>
<rect x="263" y="156" width="1" height="1" fill="#0000ff"/>
<rect x="286" y="156" width="1" height="1" fill="#0000ff"/>
<rect x="300" y="156" width="1" height="1" fill="#0000ff"/>
<rect x="314" y="156" width="1" height="1" fill="#0000ff"/>
<rect x="320" y="156" width="1" height="1" fill="#0000ff"/>
<rect x="331" y="155" width="1" height="1" fill="#d8d000"/>
<rect x="336" y="156" width="1" height="1" fill="#0000ff"/>
<rect x="343" y="153" width="2" height="1" fill="#0000ff"/>
<rect x="353" y="155" width="1" height="1" fill="#d8d000"/>
<rect x="372" y="155" width="1" height="1" fill="#d8d000"/>
<rect x="404" y="155" width="1" height="1" fill="#d8d000"/>
<rect x="423" y="156" width="1" height="1" fill="#0000ff"/>
<rect x="424" y="155" width="1" height="1" fill="#d8d000"/>
<rect x="431" y="155" width="1" height="1" fill="#d8d000"/>
<rect x="433" y="155" width="1" height="1" fill="#d8d000"/>
<rect x="434" y="155" width="1" height="1" fill="#d8d000"/>
<rect x="438" y="153" width="1" height="1" fill="#0000ff"/>
<rect x="450" y="155" width="1" height="1" fill="#d8d000"/>
<rect x="452" y="156" width="1" height="1" fill="#0000ff"/>
<rect x="459" y="156" width="1" height="1" fill="#0000ff"/>
<rect x="463" y="155" width="1" height="1" fill="#d8d000"/>
<rect x="471" y="155" width="1" height="1" fill="#d8d000"/>
<rect x="493" y="153" width="1" height="1" fill="#0000ff"/>
<rect x="525" y="156" width="1" height="1" fill="#0000ff"/>
<rect x="527" y="156" width="1" height="1" fill="#0000ff"/>
<rect x="538" y="156" width="1" height="1" fill="#0000ff"/>
<rect x="539" y="156" width="1" height="1" fill="#0000ff"/>
<rect x="556" y="155" width="1" height="1" fill="#d8d000"/>
<rect x="557" y="153" width="1" height="1" fill="#0000ff"/>
<rect x="573" y="156" width="1" height="1" fill="#0000ff"/>
<rect x="576" y="153" width="1" height="1" fill="#0000ff"/>
<rect x="582" y="155" width="1" height="1" fill="#d8d000"/>
<rect x="588" y="156" width="1" height="1" fill="#0000ff"/>
<rect x="592" y="156" width="1" height="1" fill="#0000ff"/>
<rect x="617" y="154" width="8" height="2" fill="#0000ff"/>
<rect x="618" y="155" width="1" height="1" fill="#d8d000"/>
<rect x="625" y="154" width="164" height="2" fill="#0000ff"/>
<rect x="649" y="153" width="2" height="1" fill="#0000ff"/>
<rect x="747" y="153" width="1" height="1" fill="#0000ff"/>
<rect x="754" y="153" width="1" height="1" fill="#0000ff"/>
<rect x="755" y="153" width="1" height="1" fill="#0000ff"/>
<rect x="122" y="108" width="1" height="46" fill="#0000ff"/>
<rect x="201" y="85" width="1" height="69" fill="#0000ff"/>
<rect x="280" y="85" width="1" height="69" fill="#0000ff"/>
<rect x="359" y="86" width="1" height="68" fill="#0000ff"/>
<rect x="438" y="85" width="1" height="69" fill="#0000ff"/>
<rect x="516" y="86" width="1" height="68" fill="#0000ff"/>
<rect x="437" y="117" width="1" height="38" fill="#0000ff"/>
<rect x="279" y="151" width="1" height="3" fill="#0000ff"/>
<rect x="358" y="147" width="1" height="7" fill="#0000ff"/>
<rect x="595" y="137" width="1" height="18" fill="#0000ff"/>
<rect x="594" y="149" width="1" height="6" fill="#0000ff"/>
<rect x="596" y="137" width="1" height="2" fill="#0000ff"/>
<rect x="597" y="137" width="1" height="2" fill="#0000ff"/>
<rect x="598" y="137" width="1" height="2" fill="#0000ff"/>
<rect x="599" y="138" width="1" height="2" fill="#0000ff"/>
<rect x="600" y="138" width="1" height="2" fill="#0000ff"/>
<rect x="601" y="139" width="1" height="2" fill="#0000ff"/>
<rect x="602" y="139" width="1" height="2" fill="#0000ff"/>
<rect x="603" y="139" width="1" height="2" fill="#0000ff"/>
<rect x="604" y="140" width="1" height="2" fill="#0000ff"/>
<rect x="605" y="140" width="1" height="2" fill="#0000ff"/>
<rect x="606" y="140" width="1" height="2" fill="#0000ff"/>
<rect x="607" y="141" width="1" height="2" fill="#0000ff"/>
<rect x="608" y="141" width="1" height="2" fill="#0000ff"/>
<rect x="609" y="141" width="1" height="2" fill="#0000ff"/>
<rect x="610" y="141" width="1" height="2" fill="#0000ff"/>
<rect x="611" y="142" width="1" height="2" fill="#0000ff"/>
<rect x="612" y="142" width="1" height="2" fill="#0000ff"/>
<rect x="613" y="142" width="1" height="2" fill="#0000ff"/>
<rect x="614" y="143" width="1" height="2" fill="#0000ff"/>
<rect x="615" y="143" width="1" height="2" fill="#0000ff"/>
<rect x="616" y="144" width="1" height="2" fill="#0000ff"/>
<rect x="617" y="145" width="1" height="2" fill="#0000ff"/>
<rect x="617" y="145" width="1" height="10" fill="#0000ff"/>
<rect x="616" y="143" width="1" height="5" fill="#0000ff"/>
<rect x="83" y="140" width="12" height="1" fill="#000"/>
<line x1="90" y1="141" x2="108.5" y2="155.5" stroke="#000" stroke-width="1" shape-rendering="auto"/>
<rect x="35" y="202" width="22" height="1" fill="#000"/>
<line x1="47" y1="203" x2="70" y2="218" stroke="#000" stroke-width="1" shape-rendering="auto"/>
<rect x="139" y="363" width="22" height="1" fill="#000"/>
<line x1="151" y1="364" x2="174" y2="394" stroke="#000" stroke-width="1" shape-rendering="auto"/>
<rect x="118" y="448" width="29" height="1" fill="#000"/>
<line x1="133" y1="449" x2="160" y2="463" stroke="#000" stroke-width="1" shape-rendering="auto"/>
<rect x="7" y="156" width="10" height="2" fill="#0000ff"/>
<rect x="7" y="158" width="1" height="1" fill="#0000ff"/>
<rect x="7" y="217" width="10" height="2" fill="#acaa00"/>
<rect x="7" y="219" width="1" height="1" fill="#acaa00"/>
<rect x="7" y="465" width="10" height="2" fill="#00ff00"/>
<rect x="7" y="467" width="1" height="1" fill="#00ff00"/>
<rect x="7" y="463" width="10" height="2" fill="#ff0080"/>
<rect x="7" y="465" width="1" height="1" fill="#ff0080"/>
<rect x="790" y="403" width="2" height="1" fill="#ff0080"/>
<rect x="792" y="402" width="2" height="3" fill="#ff0080"/>
<rect x="794" y="401" width="2" height="5" fill="#ff0080"/>
<rect x="796" y="400" width="2" height="7" fill="#ff0080"/>
<rect x="69" y="525" width="1" height="2" fill="#ff0080"/>
<rect x="68" y="527" width="3" height="2" fill="#ff0080"/>
<rect x="67" y="529" width="5" height="2" fill="#ff0080"/>
<rect x="66" y="531" width="7" height="2" fill="#ff0080"/>
</svg>
<div class="lbl" style="left:82.3px;top:129px;letter-spacing:-0.3px">IIN</div>
<div class="lbl" style="left:34px;top:191px;letter-spacing:0.2px">PGB</div>
<div class="lbl" style="left:138.7px;top:352px">TMR</div>
<div class="lbl" style="left:117.3px;top:437px;letter-spacing:0.95px">GATE</div>
<div style="position:absolute;left:122px;top:436px;width:1px;height:12px;background:#00ff00"></div>
<div class="ch" style="left:4.6px;top:146px;color:#0000ff">C3</div>
<div class="ch" style="left:4.6px;top:207px;color:#acaa00">C1</div>
<div class="ch" style="left:4.6px;top:454px;color:#00ff00">C4</div>
<div class="ch" style="left:4.6px;top:453px;color:#ff0080">C2</div>
<div class="box pressed" style="left:4px"><div class="in"><div class="stripe" style="background:#acaa00"></div><b style=letter-spacing:-0.6px>C1</b><span class="bd"><i style="color:#acaa00;width:10px;margin-left:0px">F</i><i style="color:#acaa00;width:23px;margin-left:1px">BwL</i><i style="color:#acaa00;width:34px;margin-left:2px">DC1M</i></span><div class="l1">50.0 V/div</div><div class="l2">51.50 V ofst</div></div></div><div class="box" style="left:104px"><div class="in"><div class="stripe" style="background:#ff0080"></div><b>C2</b><span class="bd"><i style="color:#ff0080;width:10px;margin-left:0px">F</i><i style="color:#ff0080;width:23px;margin-left:1px">BwL</i><i style="color:#ff0080;width:34px;margin-left:2px">DC1M</i></span><div class="l1">5.00 V/div</div><div class="l2">-15.050 V</div></div></div><div class="box" style="left:204px"><div class="in"><div class="stripe" style="background:#0000ff"></div><b>C3</b><span class="bd"><i style="color:#0000ff;width:10px;margin-left:0px">F</i><i style="color:#0000ff;width:23px;margin-left:1px">BwL</i><i style="color:#0000ff;width:20px;margin-left:2px">DC</i></span><div class="l1">1.00 A/div</div><div class="l2">2.0300 A</div></div></div><div class="box" style="left:304px"><div class="in"><div class="stripe" style="background:#00ff00"></div><b>C4</b><span class="bd"><i style="color:#00ff00;width:10px;margin-left:0px">F</i><i style="color:#00ff00;width:23px;margin-left:1px">BwL</i><i style="color:#00ff00;width:34px;margin-left:2px">DC1M</i></span><div class="l1">1.00 V/div</div><div class="l2">-3.0200 V</div></div></div>
<div class="ibox" style="left:583px;width:112px">
 <div class="hd"></div><span style="left:1.6px;top:0;color:#000;letter-spacing:0.3px">Timebase</span><span style="right:0px;top:0;color:#000">-2.16 s</span>
 <span style="left:2px;top:16px">Roll</span><span style="right:0px;top:16px">500 ms/div</span>
 <span style="left:2px;top:30px">500 kS</span><span style="right:0px;top:30px">100 kS/s</span>
</div>
<div class="ibox" style="left:698px;width:97px">
 <div class="hd"></div><span style="left:3px;top:0;color:#000;letter-spacing:0.2px">Trigger</span><span style="right:1px;top:2px;font-size:0;line-height:11px;height:11px"><i class="k" style="width:17px;margin-left:0">C2</i><i class="k" style="width:20px;letter-spacing:0.5px">DC</i></span>
 <span style="left:2px;top:16px">Stop</span><span style="right:0px;top:16px">5.00 V</span>
 <span style="left:2px;top:30px">Edge</span><span style="right:0px;top:30px">Negative</span>
</div>
<div style="position:absolute;left:5px;top:582px;width:61px;height:18px;background:#f6f6f6"></div>
<div style="position:absolute;left:9px;top:581.6px;font-size:14.5px;line-height:17px;color:#444;letter-spacing:1.2px;-webkit-text-stroke:0.45px #444;white-space:nowrap">LeCroy</div>
<div style="position:absolute;left:10px;top:596.5px;width:43px;height:2px;background:#444"></div>
<div style="position:absolute;left:659px;top:585px;font-size:12px;line-height:14px;color:#000;white-space:nowrap;letter-spacing:0.07px">4/14/2017 12:25:41 PM</div>
</body></html>
